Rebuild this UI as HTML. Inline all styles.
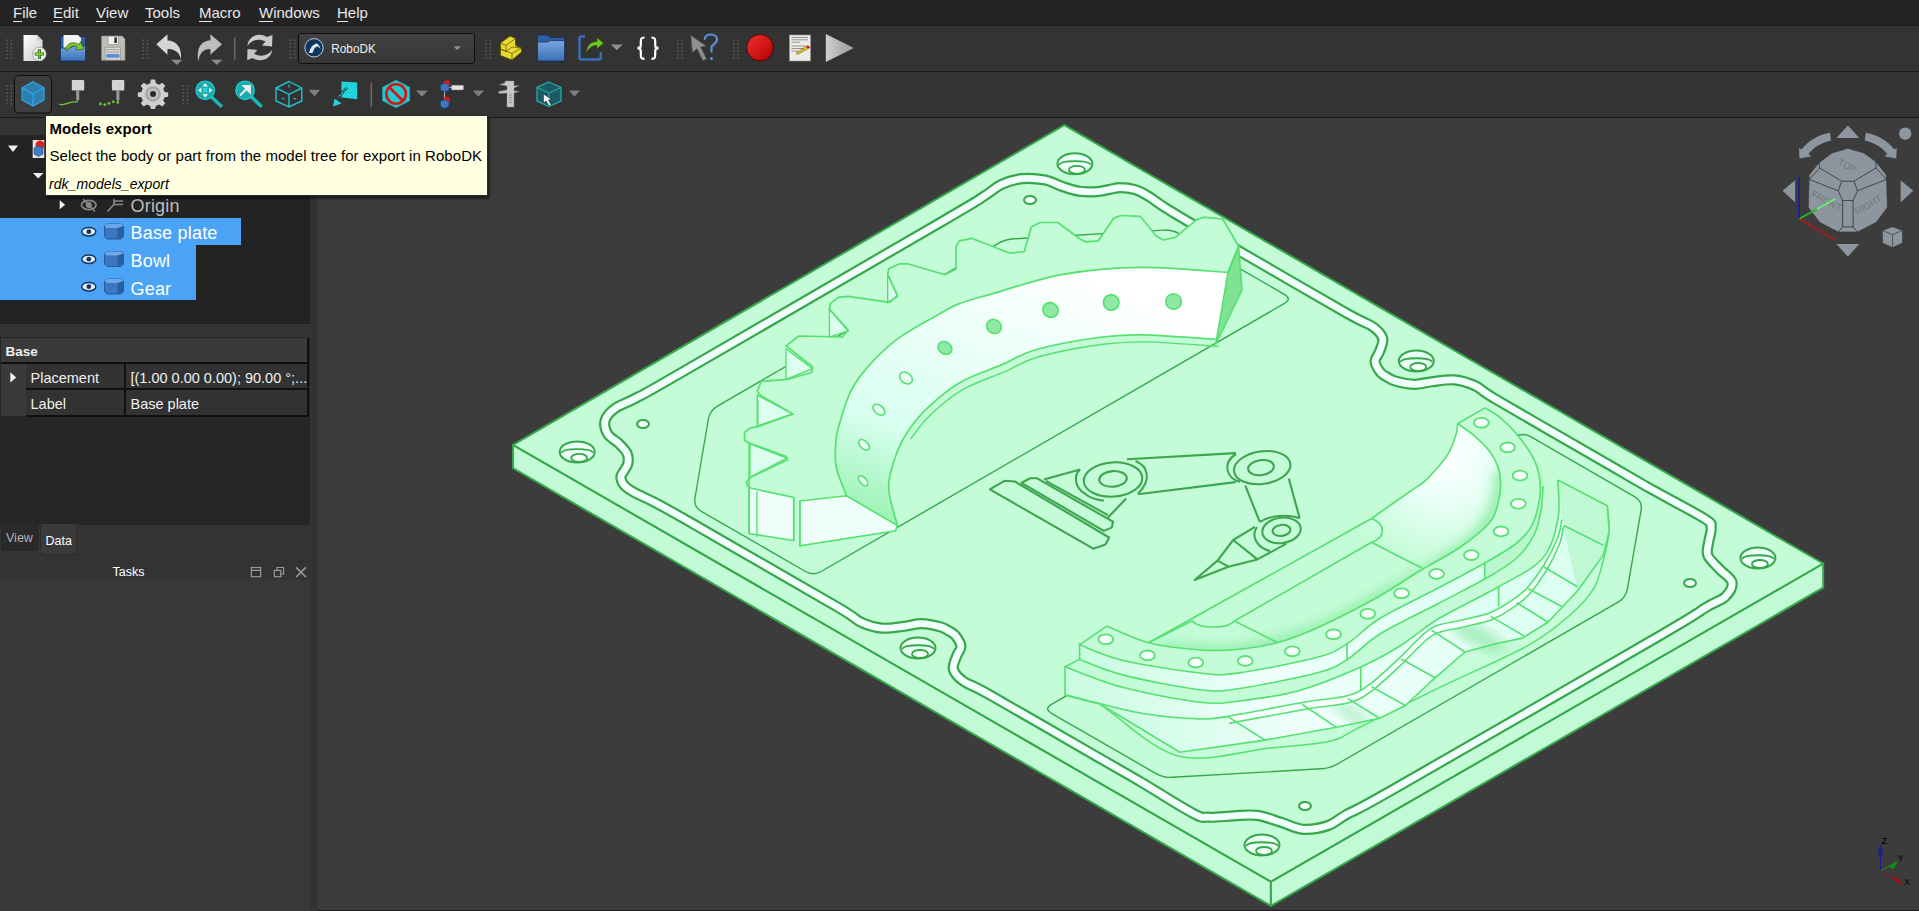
<!DOCTYPE html>
<html><head><meta charset="utf-8">
<style>
*{margin:0;padding:0;box-sizing:border-box}
html,body{width:1919px;height:911px;overflow:hidden;background:#3c3c3c;font-family:"Liberation Sans",sans-serif}
.abs{position:absolute}
#menubar{left:0;top:0;width:1919px;height:26px;background:#232323;border-bottom:1px solid #1a1a1a}
.mi{position:absolute;top:4px;font-size:15px;color:#e8e8e8;line-height:18px}
.mi u{text-decoration:none;border-bottom:1px solid #e8e8e8}
#tb1{left:0;top:26px;width:1919px;height:46px;background:#333333;border-bottom:1px solid #191919}
#tb2{left:0;top:72px;width:1919px;height:46px;background:#333333;border-bottom:1px solid #191919}
#leftpanel{left:0;top:118px;width:318px;height:793px;background:#383838}
#tree{left:0;top:118px;width:310px;height:206px;background:#232323}
#treehdr{left:0;top:118px;width:310px;height:17px;background:#333333}
#splitter{left:310px;top:118px;width:8px;height:793px;background:#333333}
#props{left:0;top:337px;width:310px;height:188px;background:#262626}
.sel{position:absolute;background:#4ba3f6}
.tt{position:absolute;font-size:18px;color:#fff;line-height:20px;letter-spacing:0.2px}
#tooltip{left:44.5px;top:114.5px;width:443px;height:81.5px;background:#ffffe1;border:1px solid #2a2a2a;box-shadow:2px 3px 2px rgba(0,0,0,0.45)}
#viewport{left:318px;top:118px;width:1601px;height:793px;background:#3c3c3c}
.pt{position:absolute;font-size:14.5px;line-height:17px;color:#f0f0f0;white-space:nowrap}
.b{font-weight:bold}.i{font-style:italic}
.tip{position:absolute;color:#000;line-height:18px;white-space:nowrap;letter-spacing:0.05px}
</style></head><body>
<div id="viewport" class="abs"></div>
<svg class="abs" style="left:0;top:0" width="1919" height="911" viewBox="0 0 1919 911">
<path d="M513.0 444.8 L1270.9 881.7 L1270.9 905.9 L513.0 468.2 Z" fill="#c2fad6" stroke="#36a84a" stroke-width="2" stroke-linejoin="round"/>
<path d="M1270.9 881.7 L1823.2 563.5 L1823.2 587.7 L1270.9 905.9 Z" fill="#c2fad6" stroke="#36a84a" stroke-width="2" stroke-linejoin="round"/>
<path d="M1064.3 125.1 L1823.2 563.5 L1270.9 881.7 L513.0 444.8 Z" fill="#c4fcd8" stroke="#36a84a" stroke-width="2" stroke-linejoin="round"/>
<path d="M942.7 221.1 C993.6 191.4 973.6 202.7 983.4 196.6 C993.1 190.6 994.8 187.6 1001.2 184.6 C1007.6 181.6 1014.6 179.4 1022.0 178.7 C1029.3 177.9 1038.7 178.8 1045.4 180.0 C1052.0 181.3 1056.2 184.5 1061.8 186.3 C1067.5 188.2 1073.4 190.3 1079.2 191.2 C1084.9 192.1 1091.5 192.0 1096.6 191.7 C1101.6 191.4 1105.4 190.2 1109.4 189.5 C1113.4 188.8 1116.1 187.5 1120.4 187.6 C1124.7 187.6 1130.5 188.3 1135.0 189.6 C1139.6 191.0 1142.6 192.6 1147.5 195.6 C1152.5 198.5 1157.0 202.5 1164.9 207.5 C1172.7 212.5 1182.1 218.0 1194.7 225.4 C1207.3 232.7 1215.0 237.1 1240.3 251.7 C1265.6 266.3 1324.6 300.6 1346.6 313.1 C1368.6 325.5 1366.2 322.1 1372.2 326.3 C1378.3 330.5 1381.5 334.2 1382.7 338.4 C1383.9 342.6 1380.8 347.7 1379.5 351.6 C1378.2 355.4 1374.9 358.0 1375.1 361.5 C1375.3 365.0 1378.6 369.9 1380.6 372.5 C1382.7 375.1 1384.9 375.8 1387.3 377.2 C1389.8 378.7 1391.0 379.9 1395.5 381.1 C1400.0 382.3 1408.5 384.2 1414.5 384.3 C1420.6 384.4 1425.0 382.5 1431.7 381.8 C1438.3 381.0 1447.2 379.2 1454.5 379.9 C1461.8 380.6 1468.1 382.5 1475.4 385.9 C1482.7 389.4 1476.8 388.1 1498.3 400.8 C1519.8 413.4 1579.2 447.5 1604.5 462.1 C1629.8 476.7 1633.4 479.0 1650.0 488.4 C1666.6 497.8 1694.0 511.9 1704.2 518.4 C1714.4 524.9 1710.4 523.6 1711.1 527.5 C1711.9 531.5 1709.2 537.4 1708.7 542.1 C1708.1 546.7 1705.9 551.0 1707.9 555.6 C1709.8 560.3 1716.3 565.4 1720.3 569.9 C1724.4 574.3 1731.2 577.9 1732.0 582.4 C1732.8 586.9 1729.4 592.7 1725.1 596.9 C1720.7 601.0 1716.7 601.1 1705.9 607.5 C1695.1 613.9 1712.2 605.3 1660.4 635.4 C1608.6 665.6 1447.6 758.4 1395.3 788.2 C1343.1 818.0 1358.1 808.1 1346.9 814.3 C1335.8 820.5 1335.8 822.9 1328.6 825.4 C1321.3 827.9 1311.3 829.8 1303.5 829.3 C1295.7 828.9 1289.6 824.9 1281.9 822.6 C1274.2 820.3 1265.3 816.5 1257.3 815.4 C1249.2 814.3 1241.9 815.5 1233.8 815.8 C1225.7 816.1 1215.5 817.7 1208.6 817.2 C1201.8 816.8 1204.2 819.1 1192.9 813.2 C1181.6 807.4 1157.2 791.6 1141.0 782.0 C1124.8 772.5 1120.8 770.4 1095.5 755.8 C1070.3 741.3 1011.4 707.1 989.5 694.7 C967.5 682.3 969.9 685.7 963.9 681.5 C957.8 677.3 954.6 673.6 953.4 669.4 C952.2 665.2 955.3 660.2 956.6 656.3 C957.8 652.5 961.1 649.9 960.9 646.4 C960.7 643.0 957.4 638.1 955.4 635.5 C953.3 632.9 951.1 632.2 948.7 630.8 C946.2 629.4 945.0 628.1 940.5 626.9 C936.0 625.7 927.5 623.8 921.5 623.7 C915.5 623.6 911.1 625.5 904.4 626.3 C897.8 627.0 889.0 628.8 881.7 628.1 C874.4 627.4 868.1 625.5 860.8 622.1 C853.5 618.6 859.4 620.0 837.9 607.3 C816.4 594.6 757.0 560.7 731.7 546.1 C706.4 531.5 698.9 527.1 686.2 519.9 C673.5 512.6 663.9 507.2 655.3 502.7 C646.7 498.2 639.9 495.6 634.7 492.7 C629.6 489.8 626.7 488.1 624.4 485.5 C622.1 482.9 620.9 479.5 620.8 477.1 C620.8 474.6 623.0 473.0 624.2 470.7 C625.4 468.4 627.4 466.2 627.9 463.3 C628.4 460.4 628.6 456.6 627.0 453.3 C625.5 449.9 621.8 446.5 618.5 443.3 C615.3 440.1 609.8 437.7 607.6 433.8 C605.4 430.0 603.9 424.6 605.2 420.3 C606.4 416.1 610.1 412.0 615.3 408.3 C620.4 404.6 625.6 403.7 636.0 398.0 C646.5 392.4 627.0 404.0 678.1 374.5 C729.2 345.0 891.9 250.7 942.7 221.1 Z" fill="none" stroke="#36a84a" stroke-width="11.2" stroke-linejoin="round"/>
<path d="M942.7 221.1 C993.6 191.4 973.6 202.7 983.4 196.6 C993.1 190.6 994.8 187.6 1001.2 184.6 C1007.6 181.6 1014.6 179.4 1022.0 178.7 C1029.3 177.9 1038.7 178.8 1045.4 180.0 C1052.0 181.3 1056.2 184.5 1061.8 186.3 C1067.5 188.2 1073.4 190.3 1079.2 191.2 C1084.9 192.1 1091.5 192.0 1096.6 191.7 C1101.6 191.4 1105.4 190.2 1109.4 189.5 C1113.4 188.8 1116.1 187.5 1120.4 187.6 C1124.7 187.6 1130.5 188.3 1135.0 189.6 C1139.6 191.0 1142.6 192.6 1147.5 195.6 C1152.5 198.5 1157.0 202.5 1164.9 207.5 C1172.7 212.5 1182.1 218.0 1194.7 225.4 C1207.3 232.7 1215.0 237.1 1240.3 251.7 C1265.6 266.3 1324.6 300.6 1346.6 313.1 C1368.6 325.5 1366.2 322.1 1372.2 326.3 C1378.3 330.5 1381.5 334.2 1382.7 338.4 C1383.9 342.6 1380.8 347.7 1379.5 351.6 C1378.2 355.4 1374.9 358.0 1375.1 361.5 C1375.3 365.0 1378.6 369.9 1380.6 372.5 C1382.7 375.1 1384.9 375.8 1387.3 377.2 C1389.8 378.7 1391.0 379.9 1395.5 381.1 C1400.0 382.3 1408.5 384.2 1414.5 384.3 C1420.6 384.4 1425.0 382.5 1431.7 381.8 C1438.3 381.0 1447.2 379.2 1454.5 379.9 C1461.8 380.6 1468.1 382.5 1475.4 385.9 C1482.7 389.4 1476.8 388.1 1498.3 400.8 C1519.8 413.4 1579.2 447.5 1604.5 462.1 C1629.8 476.7 1633.4 479.0 1650.0 488.4 C1666.6 497.8 1694.0 511.9 1704.2 518.4 C1714.4 524.9 1710.4 523.6 1711.1 527.5 C1711.9 531.5 1709.2 537.4 1708.7 542.1 C1708.1 546.7 1705.9 551.0 1707.9 555.6 C1709.8 560.3 1716.3 565.4 1720.3 569.9 C1724.4 574.3 1731.2 577.9 1732.0 582.4 C1732.8 586.9 1729.4 592.7 1725.1 596.9 C1720.7 601.0 1716.7 601.1 1705.9 607.5 C1695.1 613.9 1712.2 605.3 1660.4 635.4 C1608.6 665.6 1447.6 758.4 1395.3 788.2 C1343.1 818.0 1358.1 808.1 1346.9 814.3 C1335.8 820.5 1335.8 822.9 1328.6 825.4 C1321.3 827.9 1311.3 829.8 1303.5 829.3 C1295.7 828.9 1289.6 824.9 1281.9 822.6 C1274.2 820.3 1265.3 816.5 1257.3 815.4 C1249.2 814.3 1241.9 815.5 1233.8 815.8 C1225.7 816.1 1215.5 817.7 1208.6 817.2 C1201.8 816.8 1204.2 819.1 1192.9 813.2 C1181.6 807.4 1157.2 791.6 1141.0 782.0 C1124.8 772.5 1120.8 770.4 1095.5 755.8 C1070.3 741.3 1011.4 707.1 989.5 694.7 C967.5 682.3 969.9 685.7 963.9 681.5 C957.8 677.3 954.6 673.6 953.4 669.4 C952.2 665.2 955.3 660.2 956.6 656.3 C957.8 652.5 961.1 649.9 960.9 646.4 C960.7 643.0 957.4 638.1 955.4 635.5 C953.3 632.9 951.1 632.2 948.7 630.8 C946.2 629.4 945.0 628.1 940.5 626.9 C936.0 625.7 927.5 623.8 921.5 623.7 C915.5 623.6 911.1 625.5 904.4 626.3 C897.8 627.0 889.0 628.8 881.7 628.1 C874.4 627.4 868.1 625.5 860.8 622.1 C853.5 618.6 859.4 620.0 837.9 607.3 C816.4 594.6 757.0 560.7 731.7 546.1 C706.4 531.5 698.9 527.1 686.2 519.9 C673.5 512.6 663.9 507.2 655.3 502.7 C646.7 498.2 639.9 495.6 634.7 492.7 C629.6 489.8 626.7 488.1 624.4 485.5 C622.1 482.9 620.9 479.5 620.8 477.1 C620.8 474.6 623.0 473.0 624.2 470.7 C625.4 468.4 627.4 466.2 627.9 463.3 C628.4 460.4 628.6 456.6 627.0 453.3 C625.5 449.9 621.8 446.5 618.5 443.3 C615.3 440.1 609.8 437.7 607.6 433.8 C605.4 430.0 603.9 424.6 605.2 420.3 C606.4 416.1 610.1 412.0 615.3 408.3 C620.4 404.6 625.6 403.7 636.0 398.0 C646.5 392.4 627.0 404.0 678.1 374.5 C729.2 345.0 891.9 250.7 942.7 221.1 Z" fill="none" stroke="#f0fffb" stroke-width="6.8" stroke-linejoin="round"/>
<ellipse cx="1074.9" cy="163.8" rx="17.5" ry="10.5" fill="#e9fff6" stroke="#36a84a" stroke-width="2"/>
<path d="M1058.9 164.8 C1061.4 159.8 1088.4 159.8 1090.9 164.8" fill="none" stroke="#36a84a" stroke-width="1.8"/>
<ellipse cx="1076.9" cy="169.8" rx="8.0" ry="4.0" fill="#f4fffb" stroke="#36a84a" stroke-width="1.8"/>
<ellipse cx="577.2" cy="451.9" rx="17.5" ry="10.5" fill="#e9fff6" stroke="#36a84a" stroke-width="2"/>
<path d="M561.2 452.9 C563.7 447.9 590.7 447.9 593.2 452.9" fill="none" stroke="#36a84a" stroke-width="1.8"/>
<ellipse cx="579.2" cy="457.9" rx="8.0" ry="4.0" fill="#f4fffb" stroke="#36a84a" stroke-width="1.8"/>
<ellipse cx="1757.9" cy="558.0" rx="17.5" ry="10.5" fill="#e9fff6" stroke="#36a84a" stroke-width="2"/>
<path d="M1741.9 559.0 C1744.4 554.0 1771.4 554.0 1773.9 559.0" fill="none" stroke="#36a84a" stroke-width="1.8"/>
<ellipse cx="1759.9" cy="564.0" rx="8.0" ry="4.0" fill="#f4fffb" stroke="#36a84a" stroke-width="1.8"/>
<ellipse cx="1262.0" cy="845.0" rx="17.5" ry="10.5" fill="#e9fff6" stroke="#36a84a" stroke-width="2"/>
<path d="M1246.0 846.0 C1248.5 841.0 1275.5 841.0 1278.0 846.0" fill="none" stroke="#36a84a" stroke-width="1.8"/>
<ellipse cx="1264.0" cy="851.0" rx="8.0" ry="4.0" fill="#f4fffb" stroke="#36a84a" stroke-width="1.8"/>
<ellipse cx="1416.3" cy="361.0" rx="17.5" ry="10.5" fill="#e9fff6" stroke="#36a84a" stroke-width="2"/>
<path d="M1400.3 362.0 C1402.8 357.0 1429.8 357.0 1432.3 362.0" fill="none" stroke="#36a84a" stroke-width="1.8"/>
<ellipse cx="1418.3" cy="367.0" rx="8.0" ry="4.0" fill="#f4fffb" stroke="#36a84a" stroke-width="1.8"/>
<ellipse cx="918.0" cy="648.0" rx="17.5" ry="10.5" fill="#e9fff6" stroke="#36a84a" stroke-width="2"/>
<path d="M902.0 649.0 C904.5 644.0 931.5 644.0 934.0 649.0" fill="none" stroke="#36a84a" stroke-width="1.8"/>
<ellipse cx="920.0" cy="654.0" rx="8.0" ry="4.0" fill="#f4fffb" stroke="#36a84a" stroke-width="1.8"/>
<ellipse cx="1030.0" cy="200.0" rx="6" ry="4" fill="#f4fffb" stroke="#36a84a" stroke-width="2"/>
<ellipse cx="643.0" cy="424.0" rx="6" ry="4" fill="#f4fffb" stroke="#36a84a" stroke-width="2"/>
<ellipse cx="1690.0" cy="583.0" rx="6" ry="4" fill="#f4fffb" stroke="#36a84a" stroke-width="2"/>
<ellipse cx="1305.0" cy="806.0" rx="6" ry="4" fill="#f4fffb" stroke="#36a84a" stroke-width="2"/>
<path d="M1284.4 303.4 Q1292.2 298.9 1284.4 294.4 L1180.0 234.1 Q1172.2 229.6 1163.2 230.1 L1014.3 238.8 Q1005.3 239.3 997.5 243.8 L717.5 406.1 Q709.7 410.6 708.3 419.5 L695.0 498.0 Q693.5 506.9 701.3 511.4 L805.5 571.5 Q813.3 576.0 821.1 571.5 Z" fill="none" stroke="#36a84a" stroke-width="1.4" stroke-linejoin="round"/>
<path d="M1051.5 704.3 Q1043.7 708.8 1051.5 713.3 L1155.6 773.3 Q1163.4 777.8 1172.4 777.3 L1320.9 768.8 Q1329.9 768.3 1337.7 763.8 L1618.1 602.1 Q1625.9 597.6 1627.4 588.8 L1641.1 510.2 Q1642.7 501.4 1634.9 496.9 L1530.6 436.7 Q1522.8 432.2 1515.0 436.7 Z" fill="none" stroke="#36a84a" stroke-width="1.4" stroke-linejoin="round"/>
<path d="M749.0 487.8 L746.3 482.5 L750.7 477.3 L787.6 459.7 L785.8 456.2 L749.0 443.0 L744.6 440.4 L744.6 432.5 L749.9 428.1 L758.6 426.3 L792.9 414.0 L760.3 395.3 L757.3 391.3 L761.3 381.4 L787.0 379.4 L811.7 372.5 L812.6 366.6 L786.0 345.8 L798.8 336.0 L842.3 337.0 L848.2 330.0 L829.4 309.3 L830.4 303.4 L838.3 297.4 L848.2 296.4 L889.7 302.4 L897.6 295.5 L887.7 274.7 L888.7 268.8 L899.6 263.8 L907.5 263.8 L945.0 274.7 L956.0 269.0 L956.0 246.2 L959.3 240.9 L971.6 238.3 L1010.2 253.2 L1024.3 251.5 L1031.3 226.9 L1040.1 222.5 L1057.7 222.5 L1080.5 239.2 L1085.8 241.8 L1098.1 240.9 L1113.9 218.1 L1120.9 215.5 L1140.2 216.3 L1156.0 235.7 L1163.0 240.0 L1175.3 237.4 L1196.4 219.9 L1203.4 217.2 L1222.8 219.0 L1238.6 246.2 L1228.0 272.5 L1228.0 272.5 L1142.0 267.3 L1062.9 274.3 L992.7 293.6 L960.0 303.4 L937.2 315.2 L897.6 338.9 L868.0 366.6 L850.2 392.3 L838.3 427.9 L836.0 440.0 L836.0 466.0 L846.4 495.7 Z" fill="#c4fcd8" stroke="none"/>
<defs><linearGradient id="gband" x1="0" y1="1" x2="0.6" y2="0"><stop offset="0" stop-color="#8ff0a6"/><stop offset="0.35" stop-color="#d8fff0"/><stop offset="1" stop-color="#ffffff"/></linearGradient><linearGradient id="gbowl" x1="0" y1="1" x2="0.8" y2="0"><stop offset="0" stop-color="#b2f8c6"/><stop offset="0.5" stop-color="#d6fff0"/><stop offset="1" stop-color="#f4fffd"/></linearGradient><linearGradient id="gwall" x1="0" y1="0" x2="1" y2="0"><stop offset="0" stop-color="#c9fbe0"/><stop offset="0.4" stop-color="#f0fffc"/><stop offset="1" stop-color="#d8fff0"/></linearGradient></defs>
<path d="M846.4 495.7 C844.7 490.8 837.7 475.3 836.0 466.0 C834.3 456.7 835.6 446.4 836.0 440.0 C836.4 433.6 835.9 435.8 838.3 427.9 C840.7 419.9 845.2 402.5 850.2 392.3 C855.2 382.1 860.1 375.5 868.0 366.6 C875.9 357.7 886.1 347.5 897.6 338.9 C909.1 330.3 926.8 321.1 937.2 315.2 C947.6 309.3 950.8 307.0 960.0 303.4 C969.2 299.8 975.6 298.5 992.7 293.6 C1009.9 288.8 1038.0 278.7 1062.9 274.3 C1087.8 269.9 1114.5 267.6 1142.0 267.3 C1169.5 267.0 1213.7 271.6 1228.0 272.5 L1215.7 339.3 C1203.4 338.6 1161.6 335.2 1142.0 334.9 C1122.4 334.6 1115.9 335.0 1098.0 337.5 C1080.1 340.0 1050.7 345.5 1034.8 350.0 C1018.9 354.5 1015.2 359.0 1002.7 364.4 C990.2 369.8 972.6 375.1 960.0 382.4 C947.4 389.7 936.0 399.8 927.3 408.1 C918.5 416.4 912.8 424.0 907.5 432.0 C902.2 440.0 898.8 446.9 895.6 456.2 C892.5 465.5 888.3 476.2 888.6 487.8 C888.9 499.4 895.9 519.2 897.4 525.5 Z" fill="url(#gband)" stroke="none"/>
<path d="M749.0 487.8 L793.7 497.5 L793.7 540.5 L749.0 533.5 Z" fill="#eefffb" stroke="#55e070" stroke-width="1.6"/>
<path d="M799.9 501.0 L846.4 495.7 L897.4 525.5 L895.6 530.8 L799.9 545.7 Z" fill="#eefffb" stroke="#55e070" stroke-width="1.6"/>
<path d="M756.9 491.3 V537 M749 443 V533.5 M799.9 501 V545.7 M793.7 497.5 V540.5" stroke="#55e070" stroke-width="1.4" fill="none"/>
<path d="M757.3 395.3 L792.9 414.0 L757.3 425.9 Z" fill="#dcfff0" stroke="#55e070" stroke-width="1.4"/>
<path d="M749.9 443.9 L786.7 458.0 L749.9 477.3 Z" fill="#dcfff0" stroke="#55e070" stroke-width="1.4"/>
<path d="M786.0 348.8 L812.6 368.6 L786.0 379.4 Z" fill="#dcfff0" stroke="#55e070" stroke-width="1.4"/>
<path d="M829.4 309.3 L848.2 331.0 L829.4 337.0 Z" fill="#dcfff0" stroke="#55e070" stroke-width="1.4"/>
<path d="M887.7 274.7 L897.6 296.4 L887.7 302.4 Z" fill="#dcfff0" stroke="#55e070" stroke-width="1.4"/>
<path d="M757.8 400 V426.3" stroke="#55e070" stroke-width="1.4"/>
<path d="M1228.0 272.5 L1238.6 246.2 L1242.0 290.1 L1215.7 344.5 Z" fill="#7ee494" stroke="#55e070" stroke-width="1.6"/>
<path d="M749.0 487.8 L746.3 482.5 L750.7 477.3 L787.6 459.7 L785.8 456.2 L749.0 443.0 L744.6 440.4 L744.6 432.5 L749.9 428.1 L758.6 426.3 L792.9 414.0 L760.3 395.3 L757.3 391.3 L761.3 381.4 L787.0 379.4 L811.7 372.5 L812.6 366.6 L786.0 345.8 L798.8 336.0 L842.3 337.0 L848.2 330.0 L829.4 309.3 L830.4 303.4 L838.3 297.4 L848.2 296.4 L889.7 302.4 L897.6 295.5 L887.7 274.7 L888.7 268.8 L899.6 263.8 L907.5 263.8 L945.0 274.7 L956.0 269.0 L956.0 246.2 L959.3 240.9 L971.6 238.3 L1010.2 253.2 L1024.3 251.5 L1031.3 226.9 L1040.1 222.5 L1057.7 222.5 L1080.5 239.2 L1085.8 241.8 L1098.1 240.9 L1113.9 218.1 L1120.9 215.5 L1140.2 216.3 L1156.0 235.7 L1163.0 240.0 L1175.3 237.4 L1196.4 219.9 L1203.4 217.2 L1222.8 219.0 L1238.6 246.2 L1228.0 272.5" fill="none" stroke="#55e070" stroke-width="1.7" stroke-linejoin="round"/>
<path d="M846.4 495.7 C844.7 490.8 837.7 475.3 836.0 466.0 C834.3 456.7 835.6 446.4 836.0 440.0 C836.4 433.6 835.9 435.8 838.3 427.9 C840.7 419.9 845.2 402.5 850.2 392.3 C855.2 382.1 860.1 375.5 868.0 366.6 C875.9 357.7 886.1 347.5 897.6 338.9 C909.1 330.3 926.8 321.1 937.2 315.2 C947.6 309.3 950.8 307.0 960.0 303.4 C969.2 299.8 975.6 298.5 992.7 293.6 C1009.9 288.8 1038.0 278.7 1062.9 274.3 C1087.8 269.9 1114.5 267.6 1142.0 267.3 C1169.5 267.0 1213.7 271.6 1228.0 272.5" fill="none" stroke="#55e070" stroke-width="1.7"/>
<path d="M897.4 525.5 C895.9 519.2 888.9 499.4 888.6 487.8 C888.3 476.2 892.5 465.5 895.6 456.2 C898.8 446.9 902.2 440.0 907.5 432.0 C912.8 424.0 918.5 416.4 927.3 408.1 C936.0 399.8 947.4 389.7 960.0 382.4 C972.6 375.1 990.2 369.8 1002.7 364.4 C1015.2 359.0 1018.9 354.5 1034.8 350.0 C1050.7 345.5 1080.1 340.0 1098.0 337.5 C1115.9 335.0 1122.4 334.6 1142.0 334.9 C1161.6 335.2 1203.4 338.6 1215.7 339.3" fill="none" stroke="#55e070" stroke-width="1.7"/>
<path d="M910.5 439.0 C913.8 435.0 921.5 423.4 930.3 415.1 C939.0 406.8 950.4 396.7 963.0 389.4 C975.6 382.1 993.2 376.8 1005.7 371.4 C1018.2 366.0 1021.9 361.5 1037.8 357.0 C1053.7 352.5 1083.1 347.0 1101.0 344.5 C1118.9 342.0 1125.4 341.6 1145.0 341.9 C1164.6 342.2 1206.4 345.6 1218.7 346.3" fill="none" stroke="#55e070" stroke-width="1.4"/>
<ellipse cx="863.1" cy="480.8" rx="3.2" ry="6.0" transform="rotate(-40 863.1 480.8)" fill="#e8fff6" stroke="#55e070" stroke-width="1.6"/>
<ellipse cx="864" cy="444.8" rx="3.8" ry="6.5" transform="rotate(-45 864 444.8)" fill="#e8fff6" stroke="#55e070" stroke-width="1.6"/>
<ellipse cx="878.9" cy="409.7" rx="4.3" ry="6.8" transform="rotate(-50 878.9 409.7)" fill="#e8fff6" stroke="#55e070" stroke-width="1.6"/>
<ellipse cx="906" cy="378" rx="5.2" ry="7.0" transform="rotate(-50 906 378)" fill="#e8fff6" stroke="#55e070" stroke-width="1.6"/>
<ellipse cx="945" cy="348" rx="6.0" ry="7.3" transform="rotate(-55 945 348)" fill="#8fe8a4" stroke="#55e070" stroke-width="1.6"/>
<ellipse cx="994" cy="326.5" rx="6.8" ry="7.6" transform="rotate(-60 994 326.5)" fill="#8fe8a4" stroke="#55e070" stroke-width="1.6"/>
<ellipse cx="1050.5" cy="310" rx="7.3" ry="7.8" transform="rotate(-70 1050.5 310)" fill="#8fe8a4" stroke="#55e070" stroke-width="1.6"/>
<ellipse cx="1111.2" cy="302.4" rx="7.8" ry="7.8" transform="rotate(0 1111.2 302.4)" fill="#8fe8a4" stroke="#55e070" stroke-width="1.6"/>
<ellipse cx="1173.6" cy="301.5" rx="7.8" ry="7.8" transform="rotate(0 1173.6 301.5)" fill="#8fe8a4" stroke="#55e070" stroke-width="1.6"/>
<path d="M989.9 489.4 L1004.4 480.8 L1014.9 481.5 L1109.1 537.5 L1105.5 544.5 L1093.3 548.7 Z" fill="none" stroke="#3ea54e" stroke-width="2.1" stroke-linejoin="round"/>
<path d="M1021.5 482.8 L1030.1 478.2 L1036.7 478.2 L1113.0 521.7 L1111.8 527.6 L1103.8 530.9 Z" fill="none" stroke="#3ea54e" stroke-width="2.1" stroke-linejoin="round"/>
<path d="M1043.9 479.5 L1080.1 469.6" fill="none" stroke="#3ea54e" stroke-width="2.1" stroke-linejoin="round"/>
<path d="M1045.9 480.8 L1107.8 515.1" fill="none" stroke="#3ea54e" stroke-width="2.1" stroke-linejoin="round"/>
<path d="M1126.2 498.6 L1107.8 517.7" fill="none" stroke="#3ea54e" stroke-width="2.1" stroke-linejoin="round"/>
<ellipse cx="1113" cy="479.5" rx="29.3" ry="17.1" transform="rotate(-4 1113 479.5)" fill="none" stroke="#3ea54e" stroke-width="2.1"/>
<ellipse cx="1113" cy="478.9" rx="13.8" ry="7.8" transform="rotate(-4 1113 478.9)" fill="none" stroke="#3ea54e" stroke-width="2.1"/>
<path d="M1080 469.6 C1073 476 1075 488 1085.4 494 C1090 498 1097 500 1103.8 500.6" fill="none" stroke="#3ea54e" stroke-width="2.1"/>
<path d="M1135.5 461 C1148 466 1152 480 1138.1 493.4" fill="none" stroke="#3ea54e" stroke-width="2.1"/>
<path d="M1127.0 459.2 L1235.7 453.1" fill="none" stroke="#3ea54e" stroke-width="2.1" stroke-linejoin="round"/>
<path d="M1137.8 494.2 L1235.7 482.1" fill="none" stroke="#3ea54e" stroke-width="2.1" stroke-linejoin="round"/>
<ellipse cx="1262.2" cy="467.6" rx="28.4" ry="16.3" transform="rotate(-8 1262.2 467.6)" fill="none" stroke="#3ea54e" stroke-width="2.1"/>
<ellipse cx="1261" cy="467.6" rx="13" ry="7.5" transform="rotate(-8 1261 467.6)" fill="none" stroke="#3ea54e" stroke-width="2.1"/>
<path d="M1236 454 C1222 463 1226 478 1240 482" fill="none" stroke="#3ea54e" stroke-width="2.1"/>
<path d="M1245.3 485.7 L1259.8 522.0" fill="none" stroke="#3ea54e" stroke-width="2.1" stroke-linejoin="round"/>
<path d="M1288.8 478.5 L1299.7 518.4" fill="none" stroke="#3ea54e" stroke-width="2.1" stroke-linejoin="round"/>
<path d="M1259.8 522 C1270 515 1290 514 1299.7 518.4" fill="none" stroke="#3ea54e" stroke-width="2.1"/>
<ellipse cx="1281.5" cy="530.4" rx="19.3" ry="12.7" transform="rotate(-8 1281.5 530.4)" fill="none" stroke="#3ea54e" stroke-width="2.1"/>
<ellipse cx="1281.5" cy="530.4" rx="9" ry="5.5" transform="rotate(-8 1281.5 530.4)" fill="none" stroke="#3ea54e" stroke-width="2.1"/>
<path d="M1257 527 C1250 537 1258 548 1270 551" fill="none" stroke="#3ea54e" stroke-width="2.1"/>
<path d="M1255.0 526.8 L1233.2 540.0 L1217.5 560.6 L1194.6 580.0 L1228.4 566.7 L1257.4 559.4 L1286.4 543.7" fill="none" stroke="#3ea54e" stroke-width="2.1" stroke-linejoin="round"/>
<path d="M1233.2 540.0 L1257.4 559.4" fill="none" stroke="#3ea54e" stroke-width="2.1" stroke-linejoin="round"/>
<path d="M1217.5 560.6 L1228.4 566.7" fill="none" stroke="#3ea54e" stroke-width="2.1" stroke-linejoin="round"/>
<path d="M1108.8 710.6 C1120.6 718.2 1152.9 750.2 1179.8 756.4 C1206.7 762.6 1245.0 750.5 1270.0 748.0 C1295.0 745.5 1315.3 744.5 1330.0 741.2 C1344.7 737.9 1339.6 737.2 1357.9 728.2 C1376.2 719.2 1411.5 701.1 1439.8 687.4 C1468.1 673.6 1506.0 657.8 1527.7 645.7 C1549.4 633.6 1559.0 624.5 1570.0 615.0 C1581.0 605.5 1588.0 597.8 1593.6 588.6 C1599.2 579.4 1600.8 569.4 1603.4 560.0 C1606.0 550.6 1608.3 541.0 1609.0 532.0 C1609.7 523.0 1607.6 510.1 1607.3 505.7 L1557.9 480 L1100.5 704.3 Z" fill="#c6fcda" stroke="none"/>
<path d="M1108.8 710.6 C1120.6 718.2 1152.9 750.2 1179.8 756.4 C1206.7 762.6 1245.0 750.5 1270.0 748.0 C1295.0 745.5 1315.3 744.5 1330.0 741.2 C1344.7 737.9 1339.6 737.2 1357.9 728.2 C1376.2 719.2 1411.5 701.1 1439.8 687.4 C1468.1 673.6 1506.0 657.8 1527.7 645.7 C1549.4 633.6 1559.0 624.5 1570.0 615.0 C1581.0 605.5 1588.0 597.8 1593.6 588.6 C1599.2 579.4 1600.8 569.4 1603.4 560.0 C1606.0 550.6 1608.3 541.0 1609.0 532.0 C1609.7 523.0 1607.6 510.1 1607.3 505.7" fill="none" stroke="#55e070" stroke-width="1.5"/>
<path d="M1100.5 704.3 L1179.8 752.3 L1265.0 740.1 L1336.0 727.2 L1379.6 718.3 L1405.3 705.5 L1435.0 677.8 L1465.0 652.0 L1494.6 644.0 L1522.3 638.1 L1548.0 622.3 L1577.6 590.7 L1603.3 555.1 L1609.2 531.4 L1607.3 505.7 L1557.9 480.0 Z L1557.9 519.5 L1544 565 L1490.7 612.4 L1431 628.4 L1371.7 682.8 L1302.5 702.5 L1200 718.9 Z" fill="url(#gwall)" stroke="none"/>
<path d="M1557.9 480.0 L1607.3 505.7 L1609.2 531.4 L1603.3 555.1 L1577.6 590.7 L1561.8 519.5 Z" fill="#aef5c0" opacity="0.6"/>
<defs><radialGradient id="gshade" cx="1478" cy="636" r="26" gradientUnits="userSpaceOnUse" gradientTransform="rotate(30 1478 636) scale(1.6 0.55) translate(-554 520)"><stop offset="0" stop-color="#5fd27a" stop-opacity="0.85"/><stop offset="1" stop-color="#c4fcd8" stop-opacity="0"/></radialGradient></defs>
<ellipse cx="1478" cy="636" rx="30" ry="10" transform="rotate(28 1478 636)" fill="#7ee096" opacity="0.55" filter="url(#blur6)"/>
<ellipse cx="1352" cy="714" rx="22" ry="7" transform="rotate(28 1352 714)" fill="#7ee096" opacity="0.45" filter="url(#blur6)"/>
<path d="M1079.6 659.4 C1086.9 662.0 1103.3 670.0 1123.4 675.1 C1143.5 680.2 1180.7 687.5 1200.0 689.7 C1219.3 691.9 1219.6 691.4 1239.3 688.5 C1259.0 685.6 1300.2 677.4 1318.3 672.5 C1336.4 667.6 1337.7 665.4 1348.0 659.0 C1358.3 652.6 1364.8 643.3 1380.0 634.0 C1395.2 624.7 1421.8 612.2 1439.3 603.0 C1456.8 593.8 1472.0 586.3 1484.7 579.0 C1497.4 571.7 1507.4 566.3 1515.6 559.0 C1523.8 551.7 1529.8 543.2 1534.0 535.0 C1538.2 526.8 1539.5 518.2 1541.0 510.0 C1542.5 501.8 1542.7 490.0 1543.0 486.0 L1557.9 480.0 C1557.9 486.6 1560.6 506.3 1557.9 519.5 C1555.2 532.7 1551.9 547.8 1542.0 559.0 C1532.1 570.2 1515.7 576.8 1498.6 586.7 C1481.5 596.6 1455.7 608.4 1439.3 618.3 C1422.9 628.2 1413.1 637.9 1400.0 646.0 C1386.9 654.1 1377.7 659.5 1360.8 667.0 C1343.9 674.5 1318.8 685.0 1298.6 690.7 C1278.3 696.4 1255.7 699.1 1239.3 701.0 C1222.9 702.9 1219.3 704.4 1200.0 702.2 C1180.7 700.0 1145.9 693.5 1123.4 687.6 C1100.9 681.7 1074.7 670.3 1065.0 666.8 Z" fill="#c4fcd8" stroke="none"/>
<path d="M1079.6 644.8 C1086.9 647.4 1103.3 655.8 1123.4 660.5 C1143.5 665.2 1180.7 670.9 1200.0 673.0 C1219.3 675.1 1219.6 675.5 1239.3 672.9 C1259.0 670.2 1300.2 662.0 1318.3 657.1 C1336.4 652.2 1337.7 649.7 1348.0 643.2 C1358.3 636.7 1364.8 627.6 1380.0 618.3 C1395.2 609.0 1421.8 596.7 1439.3 587.5 C1456.8 578.3 1472.0 570.2 1484.7 563.0 C1497.4 555.8 1507.8 550.1 1515.6 544.0 C1523.4 537.9 1527.6 532.8 1531.4 526.4 C1535.2 520.0 1536.9 512.4 1538.4 505.4 C1539.9 498.4 1539.9 487.8 1540.2 484.3 L1543.0 486.0 C1542.7 490.0 1542.5 501.8 1541.0 510.0 C1539.5 518.2 1538.2 526.8 1534.0 535.0 C1529.8 543.2 1523.8 551.7 1515.6 559.0 C1507.4 566.3 1497.4 571.7 1484.7 579.0 C1472.0 586.3 1456.8 593.8 1439.3 603.0 C1421.8 612.2 1395.2 624.7 1380.0 634.0 C1364.8 643.3 1358.3 652.6 1348.0 659.0 C1337.7 665.4 1336.4 667.6 1318.3 672.5 C1300.2 677.4 1259.0 685.6 1239.3 688.5 C1219.6 691.4 1219.3 691.9 1200.0 689.7 C1180.7 687.5 1143.5 680.2 1123.4 675.1 C1103.3 670.0 1086.9 662.0 1079.6 659.4 Z" fill="url(#gwall)" stroke="none"/>
<path d="M1065.0 666.8 C1074.7 670.3 1100.9 681.7 1123.4 687.6 C1145.9 693.5 1180.7 700.0 1200.0 702.2 C1219.3 704.4 1222.9 702.9 1239.3 701.0 C1255.7 699.1 1278.3 696.4 1298.6 690.7 C1318.8 685.0 1343.9 674.5 1360.8 667.0 C1377.7 659.5 1386.9 654.1 1400.0 646.0 C1413.1 637.9 1422.9 628.2 1439.3 618.3 C1455.7 608.4 1481.5 596.6 1498.6 586.7 C1515.7 576.8 1532.1 570.2 1542.0 559.0 C1551.9 547.8 1555.2 532.7 1557.9 519.5 C1560.6 506.3 1557.9 486.6 1557.9 480.0 L1561.8 519.5 C1561.2 522.5 1560.9 529.7 1557.9 537.3 C1554.9 544.9 1549.0 556.8 1544.0 565.0 C1539.0 573.2 1533.1 581.1 1528.2 586.7 C1523.3 592.3 1520.7 594.3 1514.4 598.6 C1508.2 602.9 1499.6 608.8 1490.7 612.4 C1481.8 616.0 1471.0 617.6 1461.0 620.3 C1451.0 623.0 1441.3 622.1 1431.0 628.4 C1420.7 634.7 1409.3 649.0 1399.4 658.1 C1389.5 667.2 1380.3 676.5 1371.7 682.8 C1363.1 689.0 1359.5 692.3 1348.0 695.6 C1336.5 698.9 1322.6 699.0 1302.5 702.5 C1282.4 706.0 1244.5 713.7 1227.4 716.4 C1210.3 719.1 1213.8 719.3 1200.0 718.9 C1186.2 718.5 1161.2 716.3 1144.3 713.7 C1127.4 711.1 1111.6 706.4 1098.4 703.3 C1085.2 700.2 1070.6 696.3 1065.0 694.9 Z" fill="url(#gwall)" stroke="none"/>
<path d="M1534.9 461.5 C1535.8 465.3 1539.6 477.0 1540.2 484.3 C1540.8 491.6 1539.9 498.4 1538.4 505.4 C1536.9 512.4 1535.2 520.0 1531.4 526.4 C1527.6 532.8 1523.4 537.9 1515.6 544.0 C1507.8 550.1 1489.8 559.8 1484.7 563.0 L1484.7 579 C1489.8 575.7 1507.4 566.3 1515.6 559.0 C1523.8 551.7 1529.8 543.2 1534.0 535.0 C1538.2 526.8 1539.5 518.2 1541.0 510.0 C1542.5 501.8 1543.0 493.5 1543.0 486.0 C1543.0 478.5 1541.3 468.5 1541.0 465.0 Z" fill="#9ef0b2" opacity="0.55"/>
<defs><radialGradient id="gcon" cx="1445" cy="455" r="110" gradientUnits="userSpaceOnUse"><stop offset="0" stop-color="#ffffff"/><stop offset="0.45" stop-color="#e8fff6"/><stop offset="1" stop-color="#c4fcd8"/></radialGradient><filter id="blur6" x="-20%" y="-20%" width="140%" height="140%"><feGaussianBlur stdDeviation="6"/></filter><clipPath id="cint"><path d="M1148.5 642.8 C1157.1 644.0 1184.9 648.9 1200.0 650.0 C1215.1 651.1 1226.2 650.5 1239.3 649.2 C1252.4 647.9 1265.3 646.1 1278.8 642.3 C1292.3 638.5 1303.8 633.9 1320.3 626.4 C1336.8 618.9 1361.5 606.2 1378.0 597.0 C1394.5 587.8 1406.0 579.2 1419.5 571.0 C1433.0 562.8 1447.4 556.0 1459.0 548.0 C1470.6 540.0 1482.8 530.4 1489.3 523.0 C1495.8 515.6 1496.1 510.1 1498.0 503.6 C1499.9 497.2 1500.7 490.5 1500.7 484.3 C1500.7 478.1 1499.9 472.3 1498.0 466.7 C1496.1 461.1 1493.4 456.2 1489.3 450.9 C1485.2 445.6 1478.8 439.6 1473.5 435.1 C1468.2 430.6 1460.2 425.6 1457.6 423.7 L1457.6 423.7 C1457.3 425.6 1457.4 430.3 1455.9 435.1 C1454.5 439.9 1451.8 447.4 1448.9 452.7 C1446.0 458.0 1442.4 461.9 1438.3 466.7 C1434.2 471.5 1429.0 477.6 1424.3 481.7 C1419.6 485.8 1419.0 485.2 1410.2 491.3 C1401.4 497.4 1378.0 514.0 1371.6 518.5 L1148.5 642.8 Z"/></clipPath></defs>
<path d="M1148.5 642.8 C1157.1 644.0 1184.9 648.9 1200.0 650.0 C1215.1 651.1 1226.2 650.5 1239.3 649.2 C1252.4 647.9 1265.3 646.1 1278.8 642.3 C1292.3 638.5 1303.8 633.9 1320.3 626.4 C1336.8 618.9 1361.5 606.2 1378.0 597.0 C1394.5 587.8 1406.0 579.2 1419.5 571.0 C1433.0 562.8 1447.4 556.0 1459.0 548.0 C1470.6 540.0 1482.8 530.4 1489.3 523.0 C1495.8 515.6 1496.1 510.1 1498.0 503.6 C1499.9 497.2 1500.7 490.5 1500.7 484.3 C1500.7 478.1 1499.9 472.3 1498.0 466.7 C1496.1 461.1 1493.4 456.2 1489.3 450.9 C1485.2 445.6 1478.8 439.6 1473.5 435.1 C1468.2 430.6 1460.2 425.6 1457.6 423.7 L1457.6 423.7 C1457.3 425.6 1457.4 430.3 1455.9 435.1 C1454.5 439.9 1451.8 447.4 1448.9 452.7 C1446.0 458.0 1442.4 461.9 1438.3 466.7 C1434.2 471.5 1429.0 477.6 1424.3 481.7 C1419.6 485.8 1419.0 485.2 1410.2 491.3 C1401.4 497.4 1378.0 514.0 1371.6 518.5 L1148.5 642.8 Z" fill="#c4fcd8" stroke="none"/>
<path d="M1148.5 642.8 C1157.1 644.0 1184.9 648.9 1200.0 650.0 C1215.1 651.1 1226.2 650.5 1239.3 649.2 C1252.4 647.9 1265.3 646.1 1278.8 642.3 C1292.3 638.5 1303.8 633.9 1320.3 626.4 C1336.8 618.9 1361.5 606.2 1378.0 597.0 C1394.5 587.8 1406.0 579.2 1419.5 571.0 C1433.0 562.8 1447.4 556.0 1459.0 548.0 C1470.6 540.0 1482.8 530.4 1489.3 523.0 C1495.8 515.6 1496.1 510.1 1498.0 503.6 C1499.9 497.2 1500.7 490.5 1500.7 484.3 C1500.7 478.1 1499.9 472.3 1498.0 466.7 C1496.1 461.1 1493.4 456.2 1489.3 450.9 C1485.2 445.6 1478.8 439.6 1473.5 435.1 C1468.2 430.6 1460.2 425.6 1457.6 423.7 L1457.6 423.7 C1457.3 425.6 1457.4 430.3 1455.9 435.1 C1454.5 439.9 1451.8 447.4 1448.9 452.7 C1446.0 458.0 1442.4 461.9 1438.3 466.7 C1434.2 471.5 1429.0 477.6 1424.3 481.7 C1419.6 485.8 1419.0 485.2 1410.2 491.3 C1401.4 497.4 1378.0 514.0 1371.6 518.5 L1148.5 642.8 Z" fill="url(#gcon)" stroke="none"/>
<g clip-path="url(#cint)"><path d="M1160.0 650.0 C1173.2 650.3 1212.3 655.3 1239.0 652.0 C1265.7 648.7 1296.8 638.7 1320.0 630.0 C1343.2 621.3 1359.7 609.7 1378.0 600.0 C1396.3 590.3 1413.8 582.0 1430.0 572.0 C1446.2 562.0 1463.7 551.2 1475.0 540.0 C1486.3 528.8 1493.5 516.7 1498.0 505.0 C1502.5 493.3 1501.3 475.8 1502.0 470.0" fill="none" stroke="#98eeb0" stroke-width="16" filter="url(#blur6)"/></g>
<path d="M1079.6 644.8 C1086.9 647.4 1103.3 655.8 1123.4 660.5 C1143.5 665.2 1180.7 670.9 1200.0 673.0 C1219.3 675.1 1219.6 675.5 1239.3 672.9 C1259.0 670.2 1300.2 662.0 1318.3 657.1 C1336.4 652.2 1337.7 649.7 1348.0 643.2 C1358.3 636.7 1364.8 627.6 1380.0 618.3 C1395.2 609.0 1421.8 596.7 1439.3 587.5 C1456.8 578.3 1472.0 570.2 1484.7 563.0 C1497.4 555.8 1507.8 550.1 1515.6 544.0 C1523.4 537.9 1527.6 532.8 1531.4 526.4 C1535.2 520.0 1536.9 512.4 1538.4 505.4 C1539.9 498.4 1540.8 491.6 1540.2 484.3 C1539.6 477.0 1538.4 469.4 1534.9 461.5 C1531.4 453.6 1525.1 444.4 1519.1 436.9 C1513.1 429.4 1504.6 421.5 1498.9 416.7 C1493.2 411.9 1487.2 409.4 1484.9 407.9 L1457.6 423.7 C1460.2 425.6 1468.2 430.6 1473.5 435.1 C1478.8 439.6 1485.2 445.6 1489.3 450.9 C1493.4 456.2 1496.1 461.1 1498.0 466.7 C1499.9 472.3 1500.7 478.1 1500.7 484.3 C1500.7 490.5 1499.9 497.2 1498.0 503.6 C1496.1 510.1 1495.8 515.6 1489.3 523.0 C1482.8 530.4 1470.6 540.0 1459.0 548.0 C1447.4 556.0 1433.0 562.8 1419.5 571.0 C1406.0 579.2 1394.5 587.8 1378.0 597.0 C1361.5 606.2 1336.8 618.9 1320.3 626.4 C1303.8 633.9 1292.3 638.5 1278.8 642.3 C1265.3 646.1 1252.4 647.9 1239.3 649.2 C1226.2 650.5 1215.1 651.1 1200.0 650.0 C1184.9 648.9 1164.0 646.8 1148.5 642.8 C1133.0 638.8 1113.8 628.9 1106.8 626.1 Z" fill="#c4fcd8" stroke="none"/>
<path d="M1227.4 716.4 C1239.9 714.1 1282.4 706.0 1302.5 702.5 C1322.6 699.0 1336.5 698.9 1348.0 695.6 C1359.5 692.3 1363.1 689.0 1371.7 682.8 C1380.3 676.5 1389.5 667.2 1399.4 658.1 C1409.3 649.0 1420.7 634.7 1431.0 628.4 C1441.3 622.1 1451.0 623.0 1461.0 620.3 C1471.0 617.6 1481.8 616.0 1490.7 612.4 C1499.6 608.8 1508.2 602.9 1514.4 598.6 C1520.7 594.3 1523.3 592.3 1528.2 586.7 C1533.1 581.1 1539.0 573.2 1544.0 565.0 C1549.0 556.8 1554.9 544.9 1557.9 537.3 C1560.9 529.7 1561.2 522.5 1561.8 519.5 L1563.3 526.5 C1562.7 529.5 1562.4 536.7 1559.4 544.3 C1556.4 551.9 1550.5 563.8 1545.5 572.0 C1540.5 580.2 1534.6 588.1 1529.7 593.7 C1524.8 599.3 1522.2 601.3 1515.9 605.6 C1509.7 609.9 1501.1 615.8 1492.2 619.4 C1483.3 623.0 1472.5 624.6 1462.5 627.3 C1452.5 630.0 1442.8 629.1 1432.5 635.4 C1422.2 641.7 1410.8 656.0 1400.9 665.1 C1391.0 674.2 1381.8 683.5 1373.2 689.8 C1364.6 696.0 1361.0 699.3 1349.5 702.6 C1338.0 705.9 1324.1 706.0 1304.0 709.5 C1283.9 713.0 1241.4 721.1 1228.9 723.4 Z" fill="#f4fffd" stroke="none"/>
<path d="M1106.8 626.1 C1113.8 628.9 1133.0 638.8 1148.5 642.8 C1164.0 646.8 1184.9 648.9 1200.0 650.0 C1215.1 651.1 1226.2 650.5 1239.3 649.2 C1252.4 647.9 1265.3 646.1 1278.8 642.3 C1292.3 638.5 1303.8 633.9 1320.3 626.4 C1336.8 618.9 1361.5 606.2 1378.0 597.0 C1394.5 587.8 1406.0 579.2 1419.5 571.0 C1433.0 562.8 1447.4 556.0 1459.0 548.0 C1470.6 540.0 1482.8 530.4 1489.3 523.0 C1495.8 515.6 1496.1 510.1 1498.0 503.6 C1499.9 497.2 1500.7 490.5 1500.7 484.3 C1500.7 478.1 1499.9 472.3 1498.0 466.7 C1496.1 461.1 1493.4 456.2 1489.3 450.9 C1485.2 445.6 1478.8 439.6 1473.5 435.1 C1468.2 430.6 1460.2 425.6 1457.6 423.7" fill="none" stroke="#55e070" stroke-width="1.6" stroke-linejoin="round"/>
<path d="M1079.6 644.8 C1086.9 647.4 1103.3 655.8 1123.4 660.5 C1143.5 665.2 1180.7 670.9 1200.0 673.0 C1219.3 675.1 1219.6 675.5 1239.3 672.9 C1259.0 670.2 1300.2 662.0 1318.3 657.1 C1336.4 652.2 1337.7 649.7 1348.0 643.2 C1358.3 636.7 1364.8 627.6 1380.0 618.3 C1395.2 609.0 1421.8 596.7 1439.3 587.5 C1456.8 578.3 1472.0 570.2 1484.7 563.0 C1497.4 555.8 1507.8 550.1 1515.6 544.0 C1523.4 537.9 1527.6 532.8 1531.4 526.4 C1535.2 520.0 1536.9 512.4 1538.4 505.4 C1539.9 498.4 1540.8 491.6 1540.2 484.3 C1539.6 477.0 1538.4 469.4 1534.9 461.5 C1531.4 453.6 1525.1 444.4 1519.1 436.9 C1513.1 429.4 1504.6 421.5 1498.9 416.7 C1493.2 411.9 1487.2 409.4 1484.9 407.9" fill="none" stroke="#55e070" stroke-width="1.6" stroke-linejoin="round"/>
<path d="M1079.6 659.4 C1086.9 662.0 1103.3 670.0 1123.4 675.1 C1143.5 680.2 1180.7 687.5 1200.0 689.7 C1219.3 691.9 1219.6 691.4 1239.3 688.5 C1259.0 685.6 1300.2 677.4 1318.3 672.5 C1336.4 667.6 1337.7 665.4 1348.0 659.0 C1358.3 652.6 1364.8 643.3 1380.0 634.0 C1395.2 624.7 1421.8 612.2 1439.3 603.0 C1456.8 593.8 1472.0 586.3 1484.7 579.0 C1497.4 571.7 1507.4 566.3 1515.6 559.0 C1523.8 551.7 1529.8 543.2 1534.0 535.0 C1538.2 526.8 1539.5 518.2 1541.0 510.0 C1542.5 501.8 1542.7 490.0 1543.0 486.0" fill="none" stroke="#55e070" stroke-width="1.6" stroke-linejoin="round"/>
<path d="M1065.0 666.8 C1074.7 670.3 1100.9 681.7 1123.4 687.6 C1145.9 693.5 1180.7 700.0 1200.0 702.2 C1219.3 704.4 1222.9 702.9 1239.3 701.0 C1255.7 699.1 1278.3 696.4 1298.6 690.7 C1318.8 685.0 1343.9 674.5 1360.8 667.0 C1377.7 659.5 1386.9 654.1 1400.0 646.0 C1413.1 637.9 1422.9 628.2 1439.3 618.3 C1455.7 608.4 1481.5 596.6 1498.6 586.7 C1515.7 576.8 1532.1 570.2 1542.0 559.0 C1551.9 547.8 1555.2 532.7 1557.9 519.5 C1560.6 506.3 1557.9 486.6 1557.9 480.0" fill="none" stroke="#55e070" stroke-width="1.6" stroke-linejoin="round"/>
<path d="M1065.0 694.9 C1070.6 696.3 1085.2 700.2 1098.4 703.3 C1111.6 706.4 1127.4 711.1 1144.3 713.7 C1161.2 716.3 1186.2 718.5 1200.0 718.9 C1213.8 719.3 1210.3 719.1 1227.4 716.4 C1244.5 713.7 1282.4 706.0 1302.5 702.5 C1322.6 699.0 1336.5 698.9 1348.0 695.6 C1359.5 692.3 1363.1 689.0 1371.7 682.8 C1380.3 676.5 1389.5 667.2 1399.4 658.1 C1409.3 649.0 1420.7 634.7 1431.0 628.4 C1441.3 622.1 1451.0 623.0 1461.0 620.3 C1471.0 617.6 1481.8 616.0 1490.7 612.4 C1499.6 608.8 1508.2 602.9 1514.4 598.6 C1520.7 594.3 1523.3 592.3 1528.2 586.7 C1533.1 581.1 1539.0 573.2 1544.0 565.0 C1549.0 556.8 1554.9 544.9 1557.9 537.3 C1560.9 529.7 1561.2 522.5 1561.8 519.5" fill="none" stroke="#55e070" stroke-width="1.6" stroke-linejoin="round"/>
<path d="M1228.9 723.4 C1241.4 721.1 1283.9 713.0 1304.0 709.5 C1324.1 706.0 1338.0 705.9 1349.5 702.6 C1361.0 699.3 1364.6 696.0 1373.2 689.8 C1381.8 683.5 1391.0 674.2 1400.9 665.1 C1410.8 656.0 1422.2 641.7 1432.5 635.4 C1442.8 629.1 1452.5 630.0 1462.5 627.3 C1472.5 624.6 1483.3 623.0 1492.2 619.4 C1501.1 615.8 1509.7 609.9 1515.9 605.6 C1522.2 601.3 1524.8 599.3 1529.7 593.7 C1534.6 588.1 1540.5 580.2 1545.5 572.0 C1550.5 563.8 1556.4 551.9 1559.4 544.3 C1562.4 536.7 1562.7 529.5 1563.3 526.5" fill="none" stroke="#55e070" stroke-width="1.6" stroke-linejoin="round"/>
<path d="M1457.6 423.7 C1457.3 425.6 1457.4 430.3 1455.9 435.1 C1454.5 439.9 1451.8 447.4 1448.9 452.7 C1446.0 458.0 1442.4 461.9 1438.3 466.7 C1434.2 471.5 1429.0 477.6 1424.3 481.7 C1419.6 485.8 1419.0 485.2 1410.2 491.3 C1401.4 497.4 1378.0 514.0 1371.6 518.5" fill="none" stroke="#55e070" stroke-width="1.6" stroke-linejoin="round"/>
<path d="M1100.5 704.3 L1179.8 752.3 L1265.0 740.1 L1336.0 727.2 L1379.6 718.3 L1405.3 705.5 L1435.0 677.8 L1465.0 652.0 L1494.6 644.0 L1522.3 638.1 L1548.0 622.3 L1577.6 590.7 L1603.3 555.1 L1609.2 531.4 L1607.3 505.7 L1557.9 480.0" fill="none" stroke="#55e070" stroke-width="1.6" stroke-linejoin="round"/>
<path d="M1079.6 644.8 L1106.8 626.1 M1484.9 407.9 L1457.6 423.7 M1079.6 642.8 V659.4 L1065 666.8 V694.9 L1100.5 704.3 M1347 643.2 V659 M1360.8 667 V690.7 M1484.7 563 V579 M1498.6 586.7 V606.5" fill="none" stroke="#55e070" stroke-width="1.6" stroke-linejoin="round"/>
<path d="M1371.6 518.5 L1148.5 642.8" fill="none" stroke="#55e070" stroke-width="1.6" stroke-linejoin="round"/>
<path d="M1371.6 518.5 C1386 524 1386 538 1371.6 542.2 L1234.4 621 C1228 629 1199 629 1192.3 620.9 L1148.5 642.8 M1234.4 621 L1278 642.8 M1371.6 542.2 C1390 552 1410 562 1422 568" fill="none" stroke="#55e070" stroke-width="1.6" stroke-linejoin="round"/>
<path d="M1563.8 525.5 L1603.3 545.2" fill="none" stroke="#55e070" stroke-width="1.6" stroke-linejoin="round"/>
<path d="M1544.0 567.0 L1577.6 586.7" fill="none" stroke="#55e070" stroke-width="1.6" stroke-linejoin="round"/>
<path d="M1528.2 588.7 L1561.8 606.5" fill="none" stroke="#55e070" stroke-width="1.6" stroke-linejoin="round"/>
<path d="M1516.4 602.5 L1548.0 622.3" fill="none" stroke="#55e070" stroke-width="1.6" stroke-linejoin="round"/>
<path d="M1490.7 616.4 L1524.3 636.1" fill="none" stroke="#55e070" stroke-width="1.6" stroke-linejoin="round"/>
<path d="M1431.4 630.2 L1465.0 652.0" fill="none" stroke="#55e070" stroke-width="1.6" stroke-linejoin="round"/>
<path d="M1401.3 659.0 L1435.0 677.8" fill="none" stroke="#55e070" stroke-width="1.6" stroke-linejoin="round"/>
<path d="M1371.7 686.7 L1405.3 705.5" fill="none" stroke="#55e070" stroke-width="1.6" stroke-linejoin="round"/>
<path d="M1348.0 698.6 L1379.6 718.3" fill="none" stroke="#55e070" stroke-width="1.6" stroke-linejoin="round"/>
<path d="M1302.5 704.5 L1336.0 727.2" fill="none" stroke="#55e070" stroke-width="1.6" stroke-linejoin="round"/>
<path d="M1227.4 716.4 L1265.0 740.1" fill="none" stroke="#55e070" stroke-width="1.6" stroke-linejoin="round"/>
<path d="M1100.5 704.3 L1108.8 710.6" fill="none" stroke="#55e070" stroke-width="1.6" stroke-linejoin="round"/>
<ellipse cx="1105.8" cy="639.2" rx="7.4" ry="4.9" fill="#f6fffc" stroke="#55e070" stroke-width="1.8"/>
<ellipse cx="1147.5" cy="655.4" rx="7.4" ry="4.9" fill="#f6fffc" stroke="#55e070" stroke-width="1.8"/>
<ellipse cx="1195.8" cy="662.6" rx="7.4" ry="4.9" fill="#f6fffc" stroke="#55e070" stroke-width="1.8"/>
<ellipse cx="1245.3" cy="660.9" rx="7.4" ry="4.9" fill="#f6fffc" stroke="#55e070" stroke-width="1.8"/>
<ellipse cx="1292.4" cy="651.3" rx="7.4" ry="4.9" fill="#f6fffc" stroke="#55e070" stroke-width="1.8"/>
<ellipse cx="1333.5" cy="634.3" rx="7.4" ry="4.9" fill="#f6fffc" stroke="#55e070" stroke-width="1.8"/>
<ellipse cx="1367.8" cy="613.8" rx="7.4" ry="4.9" fill="#f6fffc" stroke="#55e070" stroke-width="1.8"/>
<ellipse cx="1401.6" cy="593.2" rx="7.4" ry="4.9" fill="#f6fffc" stroke="#55e070" stroke-width="1.8"/>
<ellipse cx="1436.6" cy="573.9" rx="7.4" ry="4.9" fill="#f6fffc" stroke="#55e070" stroke-width="1.8"/>
<ellipse cx="1471.3" cy="555.1" rx="7.4" ry="4.9" fill="#f6fffc" stroke="#55e070" stroke-width="1.8"/>
<ellipse cx="1501" cy="531.4" rx="7.4" ry="4.9" fill="#f6fffc" stroke="#55e070" stroke-width="1.8"/>
<ellipse cx="1518.3" cy="503.7" rx="7.4" ry="4.9" fill="#f6fffc" stroke="#55e070" stroke-width="1.8"/>
<ellipse cx="1520" cy="475.5" rx="7.4" ry="4.9" fill="#f6fffc" stroke="#55e070" stroke-width="1.8"/>
<ellipse cx="1507.7" cy="447.4" rx="7.4" ry="4.9" fill="#f6fffc" stroke="#55e070" stroke-width="1.8"/>
<ellipse cx="1481.4" cy="422.8" rx="7.4" ry="4.9" fill="#f6fffc" stroke="#55e070" stroke-width="1.8"/>

</svg>
<svg class="abs" style="left:1760px;top:117px" width="159" height="150" viewBox="1760 117 159 150">
 <g fill="#8d969e">
 <path d="M1847.9 125.5 L1859.3 138.1 H1836.4 Z"/>
 <path d="M1836.4 243.9 H1859.3 L1847.9 256.7 Z"/>
 <path d="M1782.5 190.8 L1795.1 180.3 V202.3 Z"/>
 <path d="M1913.3 190.8 L1900.6 180.3 V202.3 Z"/>
 <circle cx="1905.2" cy="133.7" r="6.2"/>
 <path d="M1830 132.8 C1818 135 1808 141 1801.5 149.5 L1799 148 L1799.5 158.5 L1811.5 156.3 L1808.5 154 C1813.5 147.5 1820.5 143 1831 140.5 Z"/>
 <path d="M1865.8 132.8 C1877.8 135 1887.8 141 1894.3 149.5 L1896.8 148 L1896.3 158.5 L1884.3 156.3 L1887.3 154 C1882.3 147.5 1875.3 143 1864.8 140.5 Z"/>
 <path d="M1882.5 230.5 L1892.5 226.8 L1902.5 230.5 V243 L1892.5 247.5 L1882.5 243 Z" stroke="#3a3a3a" stroke-width="0.6"/>
 </g>
 <path d="M1882.5 230.5 L1892.5 234.5 L1902.5 230.5 M1892.5 234.5 V247.5" stroke="#3a3a3a" stroke-width="0.7" fill="none"/>
 <path d="M1818.9 162.7 L1832 153 L1847.9 148.3 L1864 153 L1876 161.8 L1886.5 175 L1887.4 207.5 L1876 222.5 L1857.5 232.1 H1838.2 L1819.8 222.5 L1808.3 207.5 L1809.2 175 Z" fill="#8d969e" stroke="#3c3c3c" stroke-width="0.8"/>
 <g stroke="#2a2a2a" stroke-width="0.75" fill="none">
 <path d="M1818.9 162.7 L1819.8 168 L1809.2 179.4 M1876 161.8 V168 L1886.5 179.4"/>
 <path d="M1819.8 168 L1841.7 181.2 H1854 L1876 168"/>
 <path d="M1841.7 181.2 L1838.2 190.8 L1842.6 200.5 H1853.1 L1857.5 190.8 L1854 181.2"/>
 <path d="M1809.2 179.4 L1838.2 190.8 M1886.5 179.4 L1857.5 190.8"/>
 <path d="M1842.6 200.5 V226.9 H1853.1 V200.5 M1842.6 226.9 L1838.2 232.1 M1853.1 226.9 L1857.5 232.1"/>
 </g>
 <g fill="#707880" font-family="Liberation Sans" font-size="9.5">
 <text transform="translate(1837 164) rotate(28)">TOP</text>
 <text transform="translate(1810.5 196) rotate(28)">FRONT</text>
 <text transform="translate(1857 215) rotate(-30)">RIGHT</text>
 </g>
 <path d="M1799 219 V176.8" stroke="#1a1aa0" stroke-width="1.6"/>
 <path d="M1799 219 L1835.6 198.8" stroke="#20c020" stroke-width="1.6"/>
 <path d="M1817 209 L1835.6 198.8" stroke="#7de88a" stroke-width="1.6"/>
 <path d="M1799 219 L1835.6 240" stroke="#b01818" stroke-width="1.6"/>
</svg>
<svg class="abs" style="left:1860px;top:830px" width="59" height="60" viewBox="1860 830 59 60">
 <path d="M1880.5 871 V845" stroke="#1c1c90" stroke-width="1.3"/>
 <path d="M1878.5 849 H1882.5 V856 H1878.5 Z" fill="#1c1c90"/>
 <path d="M1880.5 871 L1896.7 862.1" stroke="#168a16" stroke-width="1.3"/>
 <path d="M1889.5 866.5 L1896.7 862.1 L1893 868 Z" fill="#168a16" stroke="#168a16" stroke-width="1.6"/>
 <path d="M1880.5 871 L1902.8 884.3" stroke="#8a1818" stroke-width="1.3"/>
 <path d="M1893.5 877 L1898 877.5 L1902.8 884.3 L1895 882 Z" fill="#8a1818"/>
 <g fill="#000" font-family="Liberation Sans" font-size="9">
 <text x="1881.5" y="844">Z</text><text x="1897.5" y="860.5">Y</text><text x="1904" y="884.5">X</text>
 </g>
</svg>
<div class="abs" style="left:318px;top:910px;width:1601px;height:1px;background:#1e1e1e"></div>
<div id="menubar" class="abs">
  <span class="mi" style="left:13px"><u>F</u>ile</span>
  <span class="mi" style="left:53px"><u>E</u>dit</span>
  <span class="mi" style="left:96px"><u>V</u>iew</span>
  <span class="mi" style="left:145px"><u>T</u>ools</span>
  <span class="mi" style="left:199px"><u>M</u>acro</span>
  <span class="mi" style="left:259px"><u>W</u>indows</span>
  <span class="mi" style="left:337px"><u>H</u>elp</span>
</div>
<div id="tb1" class="abs"></div>
<div id="tb2" class="abs"></div>
<svg class="abs" style="left:0;top:0" width="900" height="117" viewBox="0 0 900 117">
<defs>
<pattern id="grip" x="0" y="0" width="4.5" height="3.55" patternUnits="userSpaceOnUse"><rect x="0" y="0" width="1.6" height="1.6" fill="#5c5c5c"/></pattern>
<linearGradient id="gpage" x1="0" y1="0" x2="1" y2="1"><stop offset="0" stop-color="#ffffff"/><stop offset="1" stop-color="#c8c8c4"/></linearGradient>
<linearGradient id="gblue" x1="0" y1="0" x2="0" y2="1"><stop offset="0" stop-color="#7aa7dd"/><stop offset="1" stop-color="#3b6fb6"/></linearGradient>
<linearGradient id="ggray" x1="0" y1="0" x2="0" y2="1"><stop offset="0" stop-color="#e6e6e6"/><stop offset="1" stop-color="#a8a8a8"/></linearGradient>
<linearGradient id="gred" x1="0" y1="0" x2="1" y2="1"><stop offset="0" stop-color="#f43030"/><stop offset="1" stop-color="#b00000"/></linearGradient>
<linearGradient id="gplay" x1="0" y1="0" x2="1" y2="0"><stop offset="0" stop-color="#cfcfcf"/><stop offset="1" stop-color="#9a9a9a"/></linearGradient>
<linearGradient id="gcombo" x1="0" y1="0" x2="0" y2="1"><stop offset="0" stop-color="#414141"/><stop offset="1" stop-color="#363636"/></linearGradient>
</defs>
<!-- ROW 1 -->
<g fill="#5a5a5a"><rect x="6.2" y="39.40" width="1.6" height="1.6"/><rect x="10.5" y="39.40" width="1.6" height="1.6"/><rect x="6.2" y="42.95" width="1.6" height="1.6"/><rect x="10.5" y="42.95" width="1.6" height="1.6"/><rect x="6.2" y="46.50" width="1.6" height="1.6"/><rect x="10.5" y="46.50" width="1.6" height="1.6"/><rect x="6.2" y="50.05" width="1.6" height="1.6"/><rect x="10.5" y="50.05" width="1.6" height="1.6"/><rect x="6.2" y="53.60" width="1.6" height="1.6"/><rect x="10.5" y="53.60" width="1.6" height="1.6"/><rect x="6.2" y="57.15" width="1.6" height="1.6"/><rect x="10.5" y="57.15" width="1.6" height="1.6"/></g>
<!-- new doc -->
<path d="M23.5 35 H37 L42.5 40.5 V61 H23.5 Z" fill="url(#gpage)"/>
<path d="M37 35 V40.5 H42.5" fill="#d0d0d0"/>
<circle cx="39.4" cy="54" r="6.8" fill="#f2f2f2" stroke="#9a9a9a" stroke-width="0.8"/>
<path d="M39.4 49.3 V58.7 M34.7 54 H44.1" stroke="#2c4a10" stroke-width="3.2"/>
<path d="M39.4 49.8 V58.2 M35.2 54 H43.6" stroke="#76d02a" stroke-width="1.8"/>
<!-- open -->
<rect x="60.5" y="36.5" width="25" height="24.5" fill="#2d5ea6" stroke="#15305a" stroke-width="0.8"/>
<path d="M63.5 35 H78 L81 38 V50 H63.5 Z" fill="#f4f4f4"/>
<path d="M60.5 48 L70 48 L74 46 L85.5 46 V61 H60.5 Z" fill="url(#gblue)" stroke="#15305a" stroke-width="0.8"/>
<path d="M65.5 50 C66 43 74 40.5 79 45 L80.5 41.5 L84 49 L75.5 50 L77.5 47.5 C74.5 45 70 45.5 68 50 Z" fill="#7ccc2c" stroke="#2f5a10" stroke-width="0.7"/>
<!-- save -->
<path d="M101.5 36 H122 L125 39 V60.3 H101.5 Z" fill="#bdbdb6" stroke="#8a8a84" stroke-width="0.6"/>
<rect x="108" y="36.2" width="10.5" height="8.3" fill="#f0f0f0" stroke="#8a8a84" stroke-width="0.6"/>
<rect x="114.3" y="37.4" width="2.6" height="5.6" fill="#303030"/>
<rect x="105" y="47.2" width="15.4" height="12.8" fill="#d8d8d6" stroke="#8a8a84" stroke-width="0.6"/>
<rect x="106" y="49" width="13.5" height="1.2" fill="#a8a8a8"/>
<rect x="106" y="51.6" width="13.5" height="1.2" fill="#a8a8a8"/>
<rect x="106" y="54" width="13.7" height="3.8" rx="1.6" fill="#5a8fd6"/>
<g fill="#5a5a5a"><rect x="142.3" y="39.40" width="1.6" height="1.6"/><rect x="146.60000000000002" y="39.40" width="1.6" height="1.6"/><rect x="142.3" y="42.95" width="1.6" height="1.6"/><rect x="146.60000000000002" y="42.95" width="1.6" height="1.6"/><rect x="142.3" y="46.50" width="1.6" height="1.6"/><rect x="146.60000000000002" y="46.50" width="1.6" height="1.6"/><rect x="142.3" y="50.05" width="1.6" height="1.6"/><rect x="146.60000000000002" y="50.05" width="1.6" height="1.6"/><rect x="142.3" y="53.60" width="1.6" height="1.6"/><rect x="146.60000000000002" y="53.60" width="1.6" height="1.6"/><rect x="142.3" y="57.15" width="1.6" height="1.6"/><rect x="146.60000000000002" y="57.15" width="1.6" height="1.6"/></g>
<!-- undo -->
<path d="M156.3 44.3 L167.5 34.3 V40.5 C176 40.5 182 47 181 59 C179 51.5 174 49 167.5 49 V54.8 Z" fill="#d6d6d6"/>
<path d="M171 59.8 H182.5 L176.8 64.8 Z" fill="#8c8c8c"/>
<!-- redo -->
<path d="M222 44.3 L210.4 34.3 V40.5 C202 40.5 196 47 198.3 61.8 C199.5 52 204 49 210.4 49 V54.8 Z" fill="#bdbdbd"/>
<path d="M211 59.8 H222.5 L216.8 64.8 Z" fill="#8c8c8c"/>
<rect x="234" y="37" width="1.4" height="23" fill="#6a6a6a"/>
<!-- refresh -->
<path d="M247.5 46 C248 37 258 31.5 267 37 L272.5 35 L272 46.5 L262 45.5 L265.5 41.5 C259 38 251 40 247.5 46 Z" fill="#cacaca"/>
<path d="M272.3 49.5 C271.5 58.5 261.5 63.5 252.5 58 L247.2 60.3 L247.5 49 L257.5 50 L254 53.8 C260.5 57.5 268.5 55.5 272.3 49.5 Z" fill="#c4c4c4"/>
<g fill="#5a5a5a"><rect x="289.6" y="39.40" width="1.6" height="1.6"/><rect x="293.90000000000003" y="39.40" width="1.6" height="1.6"/><rect x="289.6" y="42.95" width="1.6" height="1.6"/><rect x="293.90000000000003" y="42.95" width="1.6" height="1.6"/><rect x="289.6" y="46.50" width="1.6" height="1.6"/><rect x="293.90000000000003" y="46.50" width="1.6" height="1.6"/><rect x="289.6" y="50.05" width="1.6" height="1.6"/><rect x="293.90000000000003" y="50.05" width="1.6" height="1.6"/><rect x="289.6" y="53.60" width="1.6" height="1.6"/><rect x="293.90000000000003" y="53.60" width="1.6" height="1.6"/><rect x="289.6" y="57.15" width="1.6" height="1.6"/><rect x="293.90000000000003" y="57.15" width="1.6" height="1.6"/></g>
<!-- combo -->
<rect x="298.5" y="33.5" width="176" height="30" rx="2.5" fill="url(#gcombo)" stroke="#0e0e0e" stroke-width="1"/>
<circle cx="314" cy="47.8" r="9.2" fill="#10355e" stroke="#d0dae4" stroke-width="0.9"/>
<path d="M309 53 C310 48 313 44 317 43.5 C319 44.5 320 47 320.5 49 L318 46.5 C316 46 314 48 312.5 53 Z" fill="#dfe6ee"/>
<text x="331.3" y="53" font-size="13" fill="#f0f0f0" font-family="Liberation Sans" textLength="44.5" lengthAdjust="spacingAndGlyphs">RoboDK</text>
<path d="M453.4 46.3 H460.8 L457.1 50.3 Z" fill="#8e8e8e"/>
<g fill="#5a5a5a"><rect x="485.3" y="39.40" width="1.6" height="1.6"/><rect x="489.6" y="39.40" width="1.6" height="1.6"/><rect x="485.3" y="42.95" width="1.6" height="1.6"/><rect x="489.6" y="42.95" width="1.6" height="1.6"/><rect x="485.3" y="46.50" width="1.6" height="1.6"/><rect x="489.6" y="46.50" width="1.6" height="1.6"/><rect x="485.3" y="50.05" width="1.6" height="1.6"/><rect x="489.6" y="50.05" width="1.6" height="1.6"/><rect x="485.3" y="53.60" width="1.6" height="1.6"/><rect x="489.6" y="53.60" width="1.6" height="1.6"/><rect x="485.3" y="57.15" width="1.6" height="1.6"/><rect x="489.6" y="57.15" width="1.6" height="1.6"/></g>
<!-- yellow blocks -->
<path d="M500.5 43 L510 36 L515.5 38.5 V45.5 L521.5 48 V52 L512 60 L500.5 55.5 Z" fill="#e8d832" stroke="#5a4f00" stroke-width="0.8"/>
<path d="M500.5 43 L506 45.5 L515.5 38.5 M506 45.5 V52 M500.5 49 L506 51.5 L512 47 L521.5 48 M512 53.5 V60 M512 53.5 L521.5 48 M500.5 49 L512 53.5" stroke="#5a4f00" stroke-width="0.7" fill="none"/>
<!-- folder -->
<path d="M537.5 35 H548 L550 37.5 H564.6 V61 H537.5 Z" fill="#2f5fa6" stroke="#13294d" stroke-width="0.7"/>
<path d="M537.5 42 H548 L550 40.5 H564.6 V61 H537.5 Z" fill="url(#gblue)" stroke="#13294d" stroke-width="0.7"/>
<!-- share -->
<path d="M585 36.5 H581.5 C580 36.5 579.5 37.5 579.5 39 V57.5 C579.5 59 580.5 59.5 582 59.5 H598.5 C600 59.5 600.8 58.5 600.8 57 V52" stroke="#3a6fbf" stroke-width="2.4" fill="none"/>
<path d="M586.5 53 C586.5 45 591 41.5 597 41.5 V37.5 L603.5 43 L597 49 V45.5 C592 45.5 588.5 48 586.5 53 Z" fill="#6cc820" stroke="#2a4d0b" stroke-width="0.6"/>
<path d="M610.8 44.5 H622.8 L616.8 50.2 Z" fill="#8e8e8e"/>
<!-- braces -->
<path d="M644.5 37.5 C640.5 37.5 640.8 39.5 640.8 42.5 V45.5 C640.8 47 640 48 637.5 48.2 C640 48.4 640.8 49.4 640.8 51 V54 C640.8 57 640.5 58.8 644.5 58.8 M651.5 37.5 C655.5 37.5 655.2 39.5 655.2 42.5 V45.5 C655.2 47 656 48 658.5 48.2 C656 48.4 655.2 49.4 655.2 51 V54 C655.2 57 655.5 58.8 651.5 58.8" fill="none" stroke="#ffffff" stroke-width="2.2"/>
<g fill="#5a5a5a"><rect x="677" y="39.40" width="1.6" height="1.6"/><rect x="681.3" y="39.40" width="1.6" height="1.6"/><rect x="677" y="42.95" width="1.6" height="1.6"/><rect x="681.3" y="42.95" width="1.6" height="1.6"/><rect x="677" y="46.50" width="1.6" height="1.6"/><rect x="681.3" y="46.50" width="1.6" height="1.6"/><rect x="677" y="50.05" width="1.6" height="1.6"/><rect x="681.3" y="50.05" width="1.6" height="1.6"/><rect x="677" y="53.60" width="1.6" height="1.6"/><rect x="681.3" y="53.60" width="1.6" height="1.6"/><rect x="677" y="57.15" width="1.6" height="1.6"/><rect x="681.3" y="57.15" width="1.6" height="1.6"/></g>
<!-- whats this -->
<path d="M690.8 35.4 L706 46 L700.5 46.8 L706.5 59 L703 60.5 L697 48.5 L692.5 52.5 Z" fill="#8e918c" stroke="#5c5e5a" stroke-width="0.6"/>
<path d="M704.8 39 C705 35.5 708 34.5 711 34.5 C714.5 34.5 717 36.5 717 39.5 C717 43 713 44.5 711.5 46.5 V51.5" stroke="#5b8fd4" stroke-width="2.2" fill="none" stroke-linecap="round"/>
<circle cx="711.5" cy="58.5" r="1.6" fill="#5b8fd4"/>
<g fill="#5a5a5a"><rect x="733" y="39.40" width="1.6" height="1.6"/><rect x="737.3" y="39.40" width="1.6" height="1.6"/><rect x="733" y="42.95" width="1.6" height="1.6"/><rect x="737.3" y="42.95" width="1.6" height="1.6"/><rect x="733" y="46.50" width="1.6" height="1.6"/><rect x="737.3" y="46.50" width="1.6" height="1.6"/><rect x="733" y="50.05" width="1.6" height="1.6"/><rect x="737.3" y="50.05" width="1.6" height="1.6"/><rect x="733" y="53.60" width="1.6" height="1.6"/><rect x="737.3" y="53.60" width="1.6" height="1.6"/><rect x="733" y="57.15" width="1.6" height="1.6"/><rect x="737.3" y="57.15" width="1.6" height="1.6"/></g>
<circle cx="760.1" cy="47.7" r="13.3" fill="url(#gred)" stroke="#3a0000" stroke-width="0.8"/>
<!-- notepad -->
<rect x="789.5" y="35" width="21" height="26" fill="#ecece6" stroke="#9a9a94" stroke-width="0.6"/>
<path d="M791.5 37.5 H808 M791.5 39.8 H808 M791.5 42.2 H800 M791.5 46 H806 M791.5 48.5 H806 M791.5 51 H798" stroke="#8a8a8a" stroke-width="0.9"/>
<path d="M796 53 L808 45.5 L810 47.5 L797.5 54.5 Z" fill="#e8c820" stroke="#4a3c00" stroke-width="0.5"/>
<path d="M806 46.8 L808 45.5 L810 47.5 L808 48.6 Z" fill="#d02020"/>
<path d="M825.8 34.1 L853.9 47.9 L825.8 62 Z" fill="url(#gplay)"/>
<!-- ROW 2 -->
<g fill="#5a5a5a"><rect x="6.2" y="85.20" width="1.6" height="1.6"/><rect x="10.5" y="85.20" width="1.6" height="1.6"/><rect x="6.2" y="88.75" width="1.6" height="1.6"/><rect x="10.5" y="88.75" width="1.6" height="1.6"/><rect x="6.2" y="92.30" width="1.6" height="1.6"/><rect x="10.5" y="92.30" width="1.6" height="1.6"/><rect x="6.2" y="95.85" width="1.6" height="1.6"/><rect x="10.5" y="95.85" width="1.6" height="1.6"/><rect x="6.2" y="99.40" width="1.6" height="1.6"/><rect x="10.5" y="99.40" width="1.6" height="1.6"/><rect x="6.2" y="102.95" width="1.6" height="1.6"/><rect x="10.5" y="102.95" width="1.6" height="1.6"/></g>
<rect x="14.5" y="75.5" width="37" height="37.5" rx="4" fill="#3d3d3d" stroke="#0e0e0e" stroke-width="1"/>
<path d="M33 81.7 L44 87.8 V100 L33 106.1 L22 100 V87.8 Z" fill="#2f7fae" stroke="#2ea8ef" stroke-width="1.2"/>
<path d="M22 87.8 L33 93.9 L44 87.8 M33 93.9 V106.1" stroke="#2ea8ef" stroke-width="1.2" fill="none"/>
<!-- tool path -->
<rect x="71.8" y="80" width="12.4" height="10.5" rx="1.2" fill="#d4d4d4"/>
<path d="M76.2 90.5 H79.2 V99.5 L77.7 101.5 L76.2 99.5 Z" fill="#9a9a9a"/>
<path d="M59 104 C62 106 65 104 69 102.8 C72 101.8 75 101.5 77.7 102.2" stroke="#6ccc30" stroke-width="1.3" fill="none"/>
<rect x="111.9" y="80" width="12.4" height="10.5" rx="1.2" fill="#d4d4d4"/>
<path d="M116.4 90.5 H119.4 V99.5 L117.9 101.5 L116.4 99.5 Z" fill="#9a9a9a"/>
<g fill="#6ccc30"><circle cx="100.5" cy="104" r="1.4"/><circle cx="104.8" cy="104.6" r="1.4"/><circle cx="109" cy="103.3" r="1.4"/><circle cx="113.4" cy="101.8" r="1.4"/><circle cx="117.8" cy="102.4" r="1.4"/></g>
<!-- gear -->
<g transform="translate(153 94)">
<path d="M-2.2 -14.5 H2.2 L2.8 -10.8 L6.2 -9.2 L9.2 -11.3 L12.3 -8.3 L10.3 -5.2 L11.6 -2 L15.2 -1.5 V2.8 L11.6 3.3 L10.2 6.6 L12.3 9.6 L9.2 12.6 L6.2 10.5 L2.8 12 L2.2 15 H-2.2 L-2.8 12 L-6.2 10.5 L-9.2 12.6 L-12.3 9.6 L-10.2 6.6 L-11.6 3.3 L-15.2 2.8 V-1.5 L-11.6 -2 L-10.3 -5.2 L-12.3 -8.3 L-9.2 -11.3 L-6.2 -9.2 L-2.8 -10.8 Z" fill="#cfcfcf"/>
<circle r="7.8" fill="#a5a5a5"/><circle r="5.5" fill="#c0c0c0"/><circle r="3" fill="#2b2b2b"/>
</g>
<g fill="#5a5a5a"><rect x="182.5" y="85.20" width="1.6" height="1.6"/><rect x="186.8" y="85.20" width="1.6" height="1.6"/><rect x="182.5" y="88.75" width="1.6" height="1.6"/><rect x="186.8" y="88.75" width="1.6" height="1.6"/><rect x="182.5" y="92.30" width="1.6" height="1.6"/><rect x="186.8" y="92.30" width="1.6" height="1.6"/><rect x="182.5" y="95.85" width="1.6" height="1.6"/><rect x="186.8" y="95.85" width="1.6" height="1.6"/><rect x="182.5" y="99.40" width="1.6" height="1.6"/><rect x="186.8" y="99.40" width="1.6" height="1.6"/><rect x="182.5" y="102.95" width="1.6" height="1.6"/><rect x="186.8" y="102.95" width="1.6" height="1.6"/></g>
<!-- zoom fit -->
<path d="M210.5 96 L220.5 105.5" stroke="#17b7bb" stroke-width="3.6" stroke-linecap="square"/>
<circle cx="205.2" cy="90.3" r="9.3" fill="#1aa9ad" stroke="#21d1d5" stroke-width="1.2"/>
<path d="M205.2 83 L208 86.5 H202.4 Z M205.2 97.6 L208 94.1 H202.4 Z M197.9 90.3 L201.4 87.5 V93.1 Z M212.5 90.3 L209 87.5 V93.1 Z" fill="#f0f0f0"/>
<rect x="203" y="88.1" width="4.4" height="4.4" fill="#2bd4d8"/>
<!-- zoom sel -->
<path d="M250.4 96 L260.4 105.5" stroke="#17b7bb" stroke-width="3.6" stroke-linecap="square"/>
<circle cx="245.1" cy="90.3" r="9.3" fill="#1aa9ad" stroke="#21d1d5" stroke-width="1.2"/>
<path d="M240 95.5 L248 87.5 M243.5 86 H250 V92.5 Z" stroke="#f0f0f0" stroke-width="1.8" fill="#f0f0f0"/>
<!-- cube wire -->
<path d="M289 81.5 L301.8 88 V101 L289 107 L276 101 V88 Z M276 88 L289 94.3 L301.8 88 M289 94.3 V107" stroke="#1fc5cc" stroke-width="1.4" fill="none"/>
<path d="M289 84.5 V87.5 M282 99 L284.5 98 M296 99 L293.5 98" stroke="#1fc5cc" stroke-width="1.2"/>
<path d="M308.7 89.8 H320.2 L314.5 96.5 Z" fill="#7e7e7e"/>
<!-- link -->
<path d="M341.5 81.5 L357.2 82.5 V99.2 L341.5 97.5 Z" fill="#21d4dc"/>
<path d="M347 87.5 L338 97.5" stroke="#2d2d2d" stroke-width="2.6"/>
<path d="M347 87.5 L338 97.5" stroke="#21d4dc" stroke-width="1.3" stroke-dasharray="2.2 1"/>
<path d="M333 106.5 L334.5 98.5 L341.5 103.5 Z" fill="#21d4dc"/>
<rect x="370.5" y="83" width="1.6" height="24" fill="#6a6a6a"/>
<!-- hex no -->
<path d="M396.1 80.2 L409.6 87.2 V100.8 L396.1 107.7 L382.6 100.8 V87.2 Z" fill="#22c9d2" stroke="#16a8b0" stroke-width="0.8"/>
<circle cx="396.1" cy="94" r="9.8" fill="none" stroke="#d41414" stroke-width="2.6"/>
<path d="M389.5 87.5 L402.7 100.5" stroke="#d41414" stroke-width="2.6"/>
<path d="M415.9 90.5 H427.9 L421.9 96.8 Z" fill="#7e7e7e"/>
<!-- joints -->
<path d="M444.5 90.5 V99.5 M448.5 87.5 H452" stroke="#c8c8c8" stroke-width="0.9"/>
<rect x="451.4" y="85.3" width="12.1" height="4.6" rx="1" fill="#e4e4e4" stroke="#909090" stroke-width="0.5"/>
<circle cx="446.8" cy="83.5" r="3.3" fill="#e01616"/>
<path d="M440.5 85 L444.5 83 L449 85 V90 L444.5 92 L440.5 90 Z" fill="#3f74c0" stroke="#1e3e70" stroke-width="0.6"/>
<circle cx="446.8" cy="100" r="3.3" fill="#e01616"/>
<path d="M440.5 101.5 L444.5 99.5 L449 101.5 V106.5 L444.5 108.5 L440.5 106.5 Z" fill="#3f74c0" stroke="#1e3e70" stroke-width="0.6"/>
<path d="M472.6 90.5 H484.1 L478.3 96.8 Z" fill="#7e7e7e"/>
<!-- caliper -->
<path d="M505 81 H514 V86 L519 85.5 L514 88 V91 L519 91.5 L514 93 V107 H507 V93 L499 93.5 L498.5 91.5 L507 90 V86 L499.5 84.5 L505 83 Z" fill="#c8c8c4" stroke="#8a8a86" stroke-width="0.5"/>
<path d="M509 95 H512 M509 97.5 H512 M509 100 H512 M509 102.5 H512" stroke="#6a6a6a" stroke-width="0.6"/>
<!-- select cube -->
<path d="M548.5 82 L561 87.5 V101 L549 106.6 L537 101 V87.5 Z" fill="#1c5a60" stroke="#24aab2" stroke-width="1.3"/>
<path d="M537 87.5 L549 93 L561 87.5 M549 93 V106.6" stroke="#24aab2" stroke-width="1.1" fill="none"/>
<path d="M543.5 94 L543.5 103 L546 101 L549 106 L551 105 L548.5 100 L551.5 99.5 Z" fill="#f4f4f4" stroke="#202020" stroke-width="0.5"/>
<path d="M569 90.5 H579.9 L574.5 96.8 Z" fill="#7e7e7e"/>
</svg>

<div id="leftpanel" class="abs"></div>
<div class="abs" style="left:0;top:324.5px;width:310px;height:13px;background:#333333"></div>
<div class="abs" style="left:0;top:337px;width:309px;height:1px;background:#1c1c1c"></div>
<div class="abs" style="left:0;top:524px;width:310px;height:56px;background:#333333"></div>
<div id="splitter" class="abs"></div>
<div id="tree" class="abs"></div>
<div id="treehdr" class="abs"></div>
<div class="sel" style="left:0;top:218px;width:241px;height:27px"></div>
<div class="sel" style="left:0;top:245px;width:196px;height:55px"></div>
<svg class="abs" style="left:0;top:117px" width="310" height="210" viewBox="0 117 310 210">
 <path d="M8 145.5 H18 L13 152 Z" fill="#f0f0f0"/>
 <path d="M33 173 H43.5 L38.2 178.5 Z" fill="#f0f0f0"/>
 <rect x="32.7" y="140" width="11.5" height="18" fill="#e8e8e8"/>
 <circle cx="40" cy="145" r="4.5" fill="#e02020"/>
 <path d="M34 148 L38.5 145.5 L43 148 V154 L38.5 156.5 L34 154 Z" fill="#3f7ac4" stroke="#1e3e70" stroke-width="0.6"/>
 <path d="M59.7 200.3 L65.1 204.8 L59.7 209.3 Z" fill="#f0f0f0"/>
 <g stroke="#8a8a8a" fill="none" stroke-width="1.6"><ellipse cx="88.8" cy="205" rx="7.3" ry="4.6"/><circle cx="88.8" cy="205" r="2.2" fill="#8a8a8a"/><path d="M83 199 L95 211.5"/></g>
 <g stroke="#8a8a8a" fill="none" stroke-width="1.7"><path d="M107.5 211.5 L114 204.5 L114 198.5 M114 204.5 H123 M114 201 H123"/></g>
 <g>
 <ellipse cx="88.8" cy="231.7" rx="7" ry="4.3" fill="#e8f2fb" stroke="#143863" stroke-width="1.5"/><circle cx="88.8" cy="231.7" r="2.4" fill="#143863"/>
 <ellipse cx="88.8" cy="259.2" rx="7" ry="4.3" fill="#e8f2fb" stroke="#143863" stroke-width="1.5"/><circle cx="88.8" cy="259.2" r="2.4" fill="#143863"/>
 <ellipse cx="88.8" cy="286.7" rx="7" ry="4.3" fill="#e8f2fb" stroke="#143863" stroke-width="1.5"/><circle cx="88.8" cy="286.7" r="2.4" fill="#143863"/>
 </g>
 <g id="cubeic">
 <path d="M104.5 226 L107 224 H121 L123.5 226 V236.5 L121 239 H107 L104.5 236.5 Z" fill="#3a78c2" stroke="#1d4f8c" stroke-width="0.8"/>
 <path d="M104.5 226 L107 228 H121 L123.5 226 L121 224 H107 Z" fill="#6fa6e6"/>
 <path d="M117.5 228 V239 L123.5 236.5 V226 Z" fill="#25609f"/>
 </g>
 <use href="#cubeic" x="0" y="27.5"/>
 <use href="#cubeic" x="0" y="55"/>
</svg>
<div class="tt" style="left:130.5px;top:196px;color:#bdbdbd">Origin</div>
<div class="tt" style="left:130.5px;top:223px">Base plate</div>
<div class="tt" style="left:130.5px;top:251px">Bowl</div>
<div class="tt" style="left:130.5px;top:278.5px">Gear</div>
<div id="props" class="abs"></div>
<div class="abs" style="left:1px;top:338px;width:307px;height:25px;background:#3a3a3a"></div>
<div class="abs" style="left:1px;top:362px;width:307px;height:2px;background:#101010"></div>
<div class="abs" style="left:1px;top:364px;width:25px;height:52px;background:#3a3a3a"></div>
<div class="abs" style="left:26px;top:364px;width:282px;height:24px;background:#323232"></div>
<div class="abs" style="left:26px;top:388px;width:282px;height:2px;background:#101010"></div>
<div class="abs" style="left:26px;top:390px;width:282px;height:25px;background:#323232"></div>
<div class="abs" style="left:26px;top:415px;width:282px;height:2px;background:#101010"></div>
<div class="abs" style="left:124px;top:364px;width:2px;height:52px;background:#101010"></div>
<div class="abs" style="left:307px;top:338px;width:1.5px;height:79px;background:#101010"></div>
<svg class="abs" style="left:0;top:360px" width="30" height="30" viewBox="0 360 30 30"><path d="M10.4 372.2 L16.2 377.4 L10.4 382.6 Z" fill="#f0f0f0"/></svg>
<div class="pt b" style="left:5.5px;top:342.5px;font-size:13.5px">Base</div>
<div class="pt" style="left:30.5px;top:369.5px">Placement</div>
<div class="pt" style="left:130.5px;top:369.5px">[(1.00 0.00 0.00); 90.00 °;...</div>
<div class="pt" style="left:30.5px;top:395.5px">Label</div>
<div class="pt" style="left:130.5px;top:395.5px">Base plate</div>
<div class="abs" style="left:1px;top:524px;width:37px;height:26.5px;background:#2a2a2a;border-radius:0 0 3px 3px;border:1px solid #262626;border-top:none"></div>
<div class="abs" style="left:39.5px;top:524px;width:37.5px;height:31px;background:#3a3a3a;border-radius:0 0 3px 3px;border:1px solid #2a2a2a;border-top:none"></div>
<div class="pt" style="left:6px;top:530px;font-size:12.5px;color:#b4b4b4">View</div>
<div class="pt" style="left:45.5px;top:532.5px;font-size:12.5px;color:#ffffff">Data</div>
<div class="pt" style="left:112.5px;top:563.5px;font-size:12.5px;color:#ffffff">Tasks</div>
<svg class="abs" style="left:245px;top:562px" width="65" height="20" viewBox="245 562 65 20" fill="none" stroke="#9a9a9a" stroke-width="1.2">
 <rect x="251.4" y="567.5" width="9.2" height="9.2"/><path d="M251.4 570.4 H260.6"/>
 <rect x="274.3" y="570.4" width="6.5" height="6.3"/><path d="M277 570.4 V567.5 H283.6 V573.8 H280.8"/>
 <path d="M296.2 567.4 L305.8 577 M305.8 567.4 L296.2 577" stroke-width="1.6"/>
</svg>
<div id="tooltip" class="abs"></div>
<div class="tip b" style="left:49.5px;top:120px;font-size:15px">Models export</div>
<div class="tip" style="left:49.5px;top:147px;font-size:15px">Select the body or part from the model tree for export in RoboDK</div>
<div class="tip i" style="left:49px;top:175px;font-size:14px">rdk_models_export</div>
</body></html>
